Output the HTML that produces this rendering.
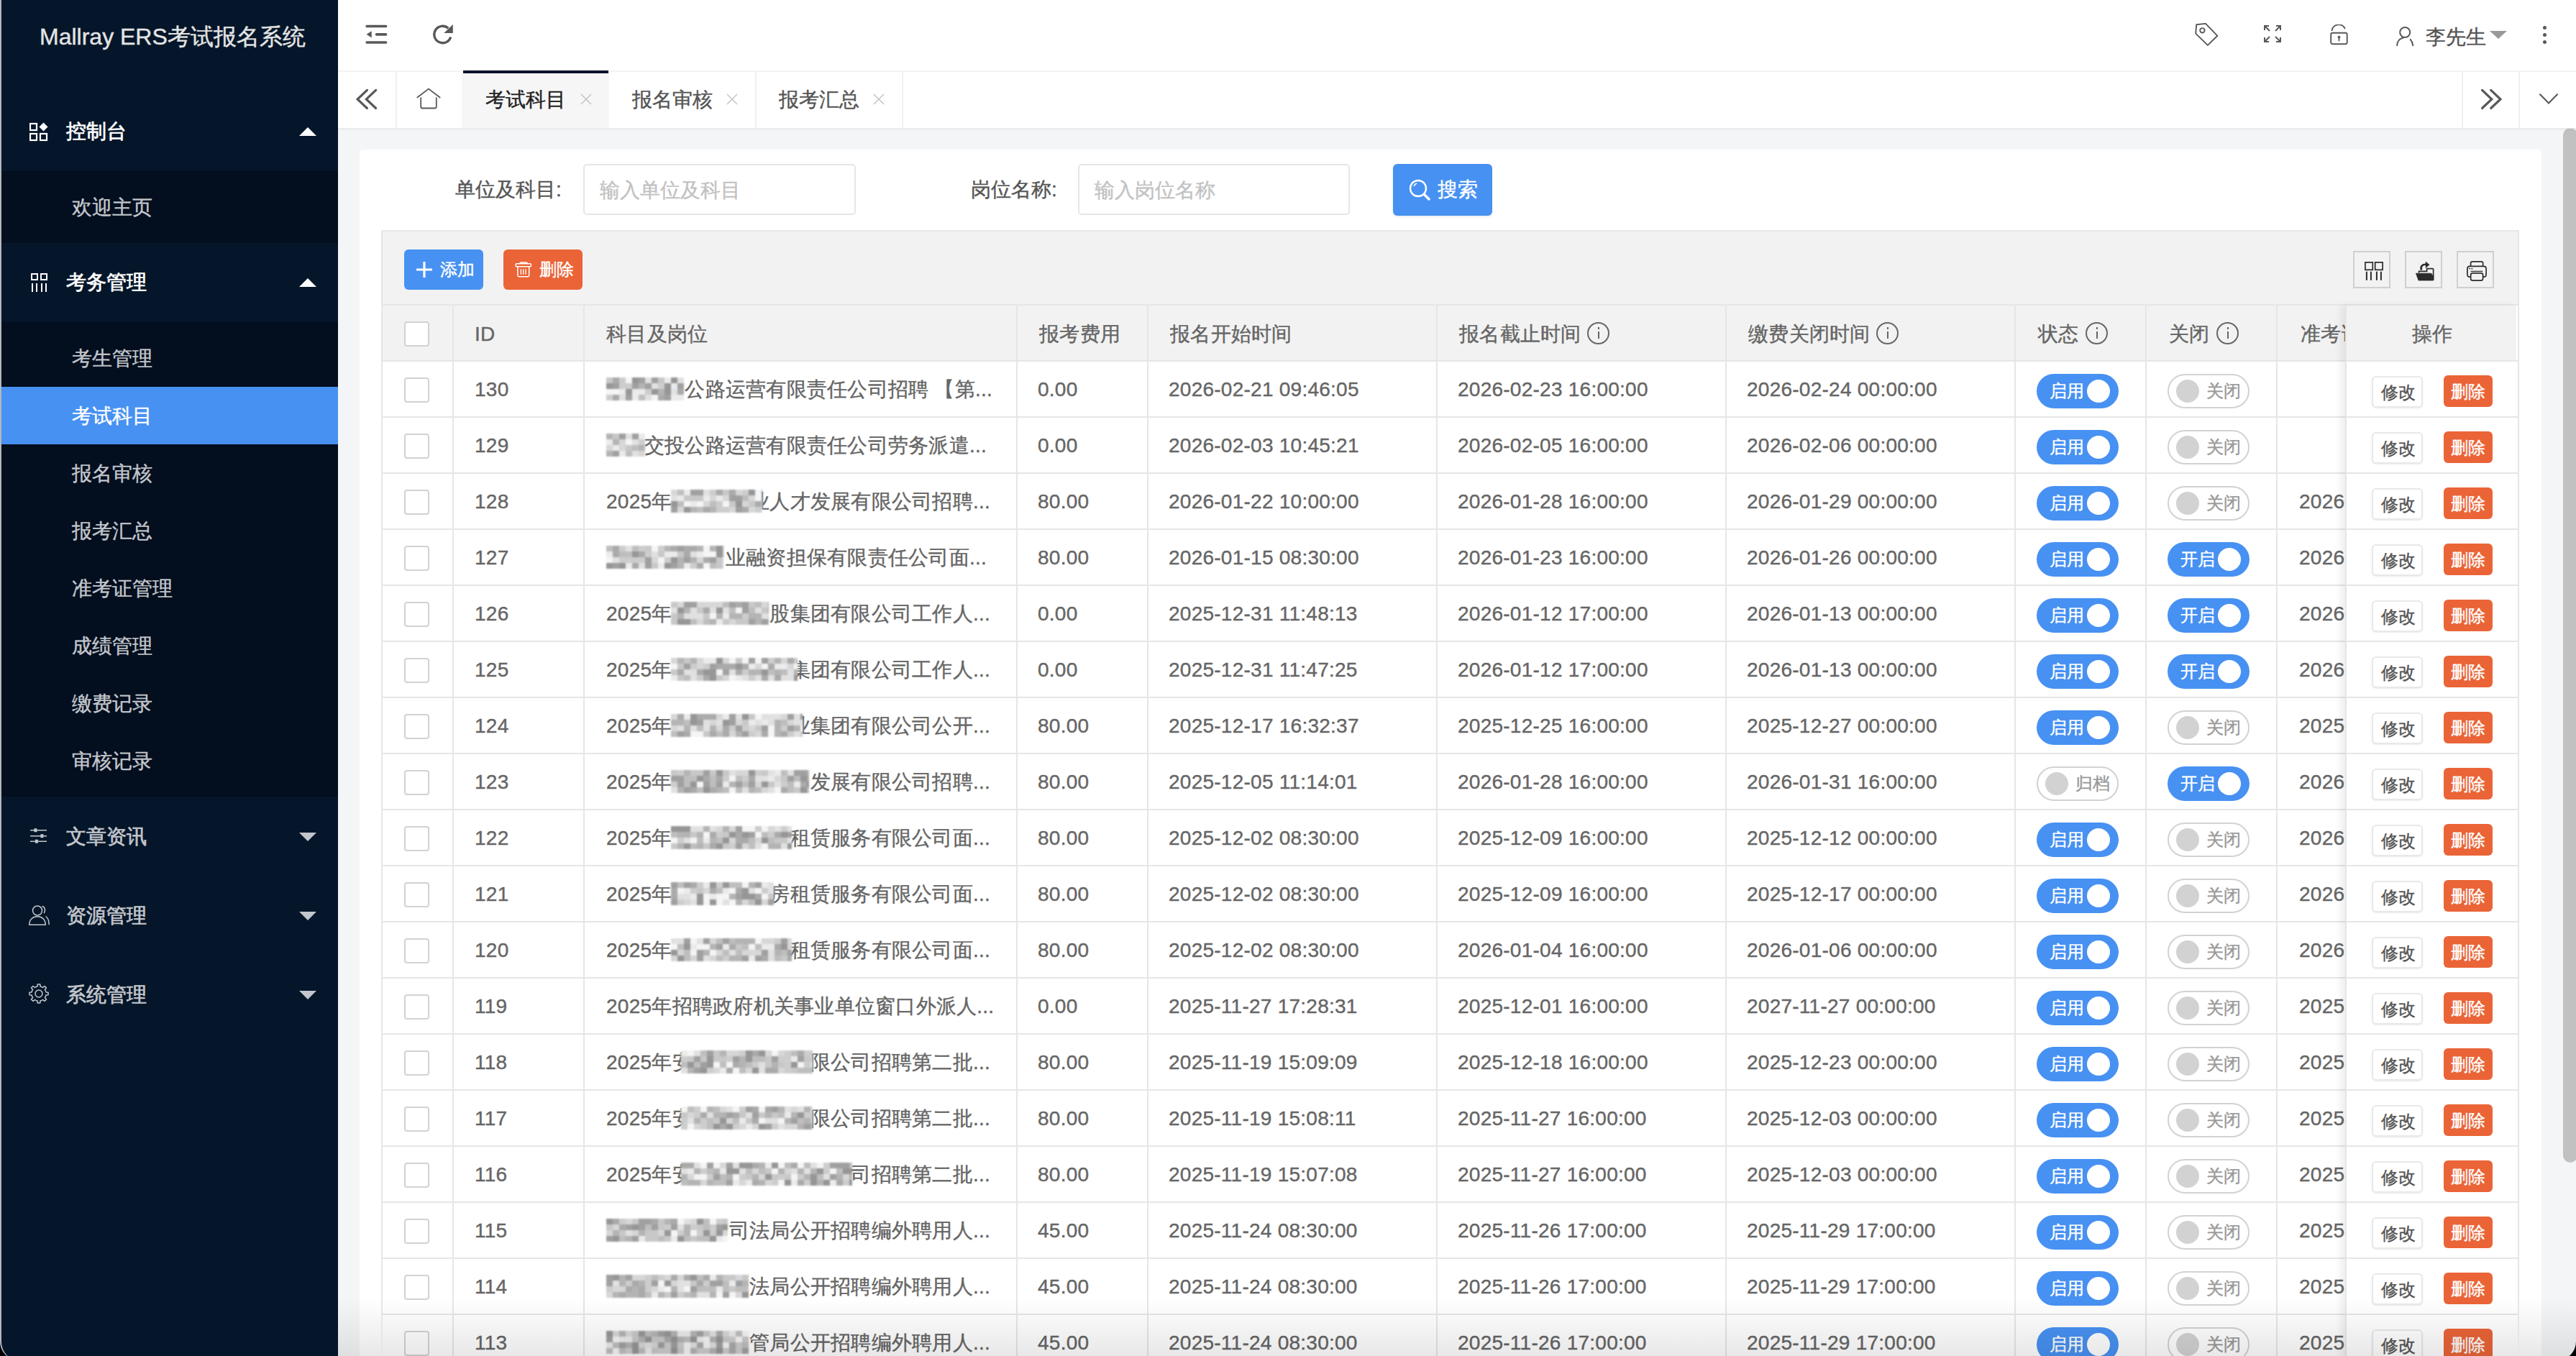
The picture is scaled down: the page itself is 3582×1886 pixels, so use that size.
<!DOCTYPE html><html><head><meta charset="utf-8"><style>
*{box-sizing:border-box;margin:0;padding:0}
html,body{width:3582px;height:1886px;overflow:hidden;background:#f4f5f7;font-family:"Liberation Sans",sans-serif;}
.a{position:absolute}
.t,.cell,.lbl,.tx,.st,.ph{-webkit-text-stroke:0.4px currentColor}
.mtop .tx{-webkit-text-stroke:0.7px currentColor}
.t{position:absolute;white-space:nowrap;line-height:1}
#side{left:0;top:0;width:470px;height:1886px;background:#05162a;}
.mtop{position:absolute;left:0;width:470px;height:110px;}
.mtop .tx{position:absolute;left:92px;top:41px;font-size:28px;color:#fff;line-height:28px;white-space:nowrap;font-weight:500}
.sub{position:absolute;left:0;width:470px;background:#030e1e}
.si{position:absolute;left:0;width:470px;height:80px}
.si .tx{position:absolute;left:100px;top:27px;font-size:28px;line-height:28px;color:#c2c6cc;white-space:nowrap}
.tri{position:absolute;width:0;height:0;border-left:12px solid transparent;border-right:12px solid transparent}
.tri.up{border-bottom:12px solid #fff}
.tri.dn{border-top:12px solid #fff}
#hdr{left:470px;top:0;width:3112px;height:99px;background:#fff}
#tabs{left:470px;top:99px;width:3112px;height:79px;background:#fff;box-shadow:0 1px 0 #e9e9ea,0 2px 4px rgba(0,0,0,0.05);z-index:2}
#content{left:470px;top:178px;width:3112px;height:1708px;background:#f4f5f7;overflow:hidden}
#card{left:30px;top:30px;width:3034px;height:1800px;background:#fff;border-radius:5px}
.inp{position:absolute;height:71px;border:2px solid #e6e6e6;border-radius:5px;background:#fff}
.inp .ph{position:absolute;left:21px;top:21px;font-size:28px;line-height:28px;color:#c2c2c2;white-space:nowrap}
.lbl{position:absolute;font-size:28px;line-height:28px;color:#555;white-space:nowrap}
#tbl{left:30px;top:112px;width:2973px;height:1700px;background:#fff}
.cell{position:absolute;font-size:28px;line-height:28px;color:#666666;white-space:nowrap;letter-spacing:0.25px}
.vl{position:absolute;top:104px;width:2px;background:#e6e6e6}
.hl{position:absolute;left:0;height:2px;background:#e6e6e6}
.cb{position:absolute;width:35px;height:35px;border:2px solid #d2d2d2;border-radius:4px;background:#fff}
.sw{position:absolute;width:114px;height:48px;border-radius:24px}
.sw.on{background:#4791f2}
.sw.off{background:#fff;border:2px solid #d2d2d2}
.sw .k{position:absolute;width:32px;height:32px;border-radius:50%;top:8px}
.sw.on .k{background:#fff;left:70px}
.sw.off .k{background:#d2d2d2;left:10px;top:6px}
.sw .st{position:absolute;font-size:24px;line-height:24px;top:12px;white-space:nowrap}
.sw.on .st{color:#fff;left:18px}
.sw.off .st{color:#999;left:52px;top:10px}
.btnm{position:absolute;width:71px;height:44px;border:2px solid #e8e8e8;border-radius:6px;background:#fff;box-shadow:0 1px 2px rgba(0,0,0,0.08)}
.btnm .st{position:absolute;left:11px;top:9px;font-size:24px;line-height:24px;color:#555}
.btnd{position:absolute;width:68px;height:44px;border-radius:6px;background:#ea6437}
.btnd .st{position:absolute;left:10px;top:11px;font-size:24px;line-height:24px;color:#fff}
.info{position:absolute;width:31px;height:31px;border:2px solid #666;border-radius:50%}
.info:after{content:'';position:absolute;left:12.5px;top:11px;width:2px;height:10px;background:#666}
.info:before{content:'';position:absolute;left:12.5px;top:5px;width:2px;height:3px;background:#666}
.mosaic{position:absolute;height:27px;overflow:hidden}
</style></head><body>
<div id="side" class="a">
<div class="t" style="left:55px;top:35px;font-size:32px;color:#e4e4e4;">Mallray ERS考试报名系统</div>
<div class="mtop" style="top:128px"><svg class="a" style="left:41px;top:42px" width="27" height="27" viewBox="0 0 27 27" fill="none" stroke="#fff" stroke-width="2.2"><rect x="1" y="2" width="9" height="9"/><rect x="1" y="16" width="9" height="9"/><rect x="15" y="16" width="9" height="9"/><path d="M19.5 0.5 L25.5 6.5 L19.5 12.5 L13.5 6.5Z" fill="#fff" stroke="none"/></svg><div class="tx" style="color:#fff;top:41px">控制台</div><div class="tri up" style="left:416px;top:49px"></div></div>
<div class="sub" style="top:238px;height:100px"><div class="si" style="top:10px"><div class="tx">欢迎主页</div></div></div>
<div class="mtop" style="top:338px"><svg class="a" style="left:43px;top:42px" width="24" height="27" viewBox="0 0 24 27" fill="none" stroke="#fff" stroke-width="2"><rect x="1" y="1" width="8" height="8"/><rect x="14" y="1" width="8" height="8"/><path d="M2 14v12M8 14v12M15 14v12M21 14v12"/></svg><div class="tx" style="color:#fff;top:41px">考务管理</div><div class="tri up" style="left:416px;top:49px"></div></div>
<div class="sub" style="top:448px;height:660px"><div class="si" style="top:10px"><div class="tx">考生管理</div></div><div class="si" style="top:90px;background:#4791f2"><div class="tx" style="color:#fff">考试科目</div></div><div class="si" style="top:170px"><div class="tx">报名审核</div></div><div class="si" style="top:250px"><div class="tx">报考汇总</div></div><div class="si" style="top:330px"><div class="tx">准考证管理</div></div><div class="si" style="top:410px"><div class="tx">成绩管理</div></div><div class="si" style="top:490px"><div class="tx">缴费记录</div></div><div class="si" style="top:570px"><div class="tx">审核记录</div></div></div>
<div class="mtop" style="top:1108px"><svg class="a" style="left:42px;top:44px" width="24" height="22" viewBox="0 0 24 22" fill="#c3c6cc" stroke="#c3c6cc" stroke-width="1.6"><path d="M0 2.7H23M0 10.7H23M0 18.2H23" fill="none"/><rect x="5.4" y="0.2" width="4" height="5" stroke="none"/><rect x="14.4" y="8.2" width="4" height="5" stroke="none"/><rect x="6.9" y="15.7" width="4" height="5" stroke="none"/></svg><div class="tx" style="color:#c3c6cc;top:42px">文章资讯</div><div class="tri dn" style="left:416px;top:50px;border-top-color:#c3c6cc"></div></div>
<div class="mtop" style="top:1218px"><svg class="a" style="left:40px;top:41px" width="29" height="28" viewBox="0 0 29 28" fill="none" stroke="#c3c6cc" stroke-width="1.5"><circle cx="12" cy="7.5" r="6.5"/><path d="M0.8 27.2C0.8 20 5.5 15.8 12 15.8S23.2 20 23.2 27.2Z"/><path d="M18.5 1.6C22.5 2.5 23.8 7.5 21 11M23.5 15.5C26.5 17.5 28.2 21.5 28.2 27.2"/></svg><div class="tx" style="color:#c3c6cc;top:42px">资源管理</div><div class="tri dn" style="left:416px;top:50px;border-top-color:#c3c6cc"></div></div>
<div class="mtop" style="top:1328px"><svg class="a" style="left:40px;top:40px" width="28" height="28" viewBox="0 0 28 28" fill="none" stroke="#c3c6cc" stroke-width="1.5" stroke-linejoin="round"><path d="M23.42 10.10 L24.01 12.05 L27.07 12.16 L27.07 15.84 L24.01 15.95 L23.42 17.90 L22.46 19.70 L24.54 21.94 L21.94 24.54 L19.70 22.46 L17.90 23.42 L15.95 24.01 L15.84 27.07 L12.16 27.07 L12.05 24.01 L10.10 23.42 L8.30 22.46 L6.06 24.54 L3.46 21.94 L5.54 19.70 L4.58 17.90 L3.99 15.95 L0.93 15.84 L0.93 12.16 L3.99 12.05 L4.58 10.10 L5.54 8.30 L3.46 6.06 L6.06 3.46 L8.30 5.54 L10.10 4.58 L12.05 3.99 L12.16 0.93 L15.84 0.93 L15.95 3.99 L17.90 4.58 L19.70 5.54 L21.94 3.46 L24.54 6.06 L22.46 8.30 Z"/><circle cx="14" cy="14" r="5"/></svg><div class="tx" style="color:#c3c6cc;top:42px">系统管理</div><div class="tri dn" style="left:416px;top:50px;border-top-color:#c3c6cc"></div></div>
</div>
<div id="hdr" class="a">
<svg class="a" style="left:38px;top:34px" width="31" height="28" viewBox="0 0 31 28" fill="none" stroke="#595959" stroke-width="3.7" stroke-linecap="round"><path d="M2.15 2.5H28.55M15.55 13.8H28.55M2.15 25H28.55"/><path d="M1.6 13.8L8.7 9.3V18.6Z" fill="#595959" stroke="none"/></svg>
<svg class="a" style="left:132px;top:33px" width="30" height="30" viewBox="0 0 30 30" fill="none"><path d="M21.33 6.31A11.7 11.7 0 1 0 24.69 18.42" stroke="#595959" stroke-width="3.4"/><path d="M27.8 1V13.1H15.3Z" fill="#595959"/></svg>
<svg class="a" style="left:2582px;top:32px" width="34" height="34" viewBox="0 0 34 34" fill="none" stroke="#595959" stroke-width="1.9" stroke-linejoin="round"><path d="M2.2 2.2L15 0.9L31.4 17.8L17.9 30.9L1.2 14.6Z"/><circle cx="10.4" cy="10.3" r="3.2"/></svg>
<svg class="a" style="left:2678px;top:35px" width="24" height="24" viewBox="0 0 24 24" fill="none" stroke="#595959" stroke-width="2"><path d="M1 7V1h6M1 1l7 7M17 1h6v6M23 1l-7 7M1 17v6h6M1 23l7-7M23 17v6h-6M23 23l-7-7"/></svg>
<svg class="a" style="left:2770px;top:34px" width="26" height="29" viewBox="0 0 26 29" fill="none" stroke="#595959" stroke-width="1.9"><rect x="1.2" y="11.8" width="22.5" height="15.5" rx="2.2"/><path d="M2.4 9C4.2 -1.6 17 -2.4 20.9 6.2"/><circle cx="12.5" cy="17.6" r="1.9" fill="#595959" stroke="none"/><path d="M12.5 18V22.6" stroke-width="1.8" stroke-linecap="round"/></svg>
<svg class="a" style="left:2862px;top:37px" width="25" height="28" viewBox="0 0 25 28" fill="none" stroke="#595959" stroke-width="2" stroke-linecap="round"><circle cx="12.2" cy="8" r="7"/><path d="M1.2 26.2C1.5 20.5 4.5 16.8 9.8 15.6M19.7 17.8C21.6 20.2 23 23 23.2 26.2"/></svg>
<div class="t" style="left:2903px;top:38px;font-size:28px;color:#555">李先生</div>
<div class="tri" style="left:2992px;top:43px;border-top:11px solid #999;border-left:12px solid transparent;border-right:12px solid transparent"></div>
<div class="a" style="left:3066px;top:36px;width:5px;height:5px;border-radius:50%;background:#595959"></div>
<div class="a" style="left:3066px;top:46px;width:5px;height:5px;border-radius:50%;background:#595959"></div>
<div class="a" style="left:3066px;top:56px;width:5px;height:5px;border-radius:50%;background:#595959"></div>
</div>
<div id="tabs" class="a">
<div class="a" style="left:0;top:-1px;width:3112px;height:2px;background:#f2f2f2"></div>
<div class="a" style="left:80px;top:0;width:2px;height:79px;background:#f0f0f0"></div>
<svg class="a" style="left:20px;top:21px" width="40" height="40" viewBox="0 0 40 40" fill="none" stroke="#595959" stroke-width="3.2" stroke-linecap="round"><path d="M20.4 5.4L7.1 18L20.4 30.5M32.6 5.4L19.3 18L32.6 30.5"/></svg>
<svg class="a" style="left:105px;top:19px" width="42" height="36" viewBox="0 0 42 36" fill="none" stroke="#595959" stroke-width="1.8" stroke-linecap="round"><path d="M5.3 17.5L21 5.6L36.7 17.5"/><path d="M10.2 18.2V30.5Q10.2 32.5 12.2 32.5H29.8Q31.8 32.5 31.8 30.5V18.2"/></svg>
<div class="a" style="left:172px;top:0;width:205px;height:79px;background:#f6f6f6"></div>
<div class="a" style="left:174px;top:-1px;width:202px;height:4px;background:#06132a"></div>
<div class="t" style="left:205px;top:26px;font-size:28px;color:#222">考试科目</div>
<svg class="a" style="left:337px;top:31px" width="16" height="16" viewBox="0 0 16 16" stroke="#c4c4c4" stroke-width="1.5"><path d="M1 1L15 15M15 1L1 15"/></svg>
<div class="a" style="left:580px;top:0;width:2px;height:79px;background:#f0f0f0"></div>
<div class="t" style="left:409px;top:26px;font-size:28px;color:#555">报名审核</div>
<svg class="a" style="left:540px;top:31px" width="16" height="16" viewBox="0 0 16 16" stroke="#c4c4c4" stroke-width="1.5"><path d="M1 1L15 15M15 1L1 15"/></svg>
<div class="a" style="left:784px;top:0;width:2px;height:79px;background:#f0f0f0"></div>
<div class="t" style="left:613px;top:26px;font-size:28px;color:#555">报考汇总</div>
<svg class="a" style="left:744px;top:31px" width="16" height="16" viewBox="0 0 16 16" stroke="#c4c4c4" stroke-width="1.5"><path d="M1 1L15 15M15 1L1 15"/></svg>
<div class="a" style="left:2953px;top:0;width:2px;height:79px;background:#f0f0f0"></div>
<div class="a" style="left:3032px;top:0;width:2px;height:79px;background:#f0f0f0"></div>
<svg class="a" style="left:2970px;top:21px" width="40" height="40" viewBox="0 0 40 40" fill="none" stroke="#595959" stroke-width="3.2" stroke-linecap="round"><path d="M11.5 5.4L24.8 18L11.5 30.5M23.7 5.4L37 18L23.7 30.5"/></svg>
<svg class="a" style="left:3055px;top:26px" width="40" height="26" viewBox="0 0 40 26" fill="none" stroke="#595959" stroke-width="2.1" stroke-linecap="round"><path d="M7 6.2L19 18.5L31 6.2"/></svg>
</div>
<div id="content" class="a">
<div id="card" class="a">
<div class="lbl" style="left:133px;top:42px">单位及科目:</div>
<div class="inp" style="left:311px;top:20px;width:379px"><div class="ph">输入单位及科目</div></div>
<div class="lbl" style="left:850px;top:42px">岗位名称:</div>
<div class="inp" style="left:999px;top:20px;width:378px"><div class="ph">输入岗位名称</div></div>
<div class="a" style="left:1437px;top:20px;width:138px;height:72px;background:#4791f2;border-radius:6px;box-shadow:0 2px 3px rgba(0,0,0,0.08)"><svg class="a" style="left:22px;top:21px" width="32" height="32" viewBox="0 0 32 32" fill="none" stroke="#fff" stroke-width="2.4"><circle cx="13" cy="13" r="11"/><path d="M21 21 L29 29" stroke-width="3.5"/><path d="M7 10 a7 7 0 0 1 4 -4" stroke-width="1.6"/></svg><div class="t" style="left:62px;top:22px;font-size:28px;color:#fff">搜索</div></div>
<div id="tbl" class="a">
<div class="a" style="left:0;top:0;width:2973px;height:104px;background:#f2f2f2"></div>
<div class="a" style="left:0;top:0;width:2973px;height:2px;background:#e6e6e6"></div>
<div class="a" style="left:0;top:0;width:2px;height:1700px;background:#e6e6e6;z-index:3"></div>
<div class="a" style="left:2971px;top:0;width:2px;height:1700px;background:#e6e6e6;z-index:3"></div>
<div class="a" style="left:32px;top:27px;width:110px;height:56px;background:#4791f2;border-radius:6px"><svg class="a" style="left:17px;top:17px" width="22" height="22" viewBox="0 0 22 22" stroke="#fff" stroke-width="3.2"><path d="M11 0V22M0 11H22"/></svg><div class="t" style="left:50px;top:16px;font-size:24px;color:#fff">添加</div></div>
<div class="a" style="left:170px;top:27px;width:110px;height:56px;background:#ea6437;border-radius:6px"><svg class="a" style="left:16px;top:16px" width="24" height="24" viewBox="0 0 24 24" fill="none" stroke="#fff" stroke-width="1.5"><rect x="1" y="3.7" width="21.5" height="4" rx="1.5"/><path d="M6.8 3.7Q6.8 2 8.5 2H15.6Q17.3 2 17.3 3.7"/><path d="M3.9 7.8V20Q3.9 21.7 5.6 21.7H18Q19.7 21.7 19.7 20V7.8"/><path d="M8.4 11.3V18.8M11.7 11.3V18.8M15 11.3V18.8" stroke-width="1.4"/></svg><div class="t" style="left:50px;top:16px;font-size:24px;color:#fff">删除</div></div>
<div class="a" style="left:2742px;top:29px;width:52px;height:52px;border:2px solid #cfcfcf"></div>
<div class="a" style="left:2814px;top:29px;width:52px;height:52px;border:2px solid #cfcfcf"></div>
<div class="a" style="left:2886px;top:29px;width:52px;height:52px;border:2px solid #cfcfcf"></div>
<svg class="a" style="left:2758px;top:44px" width="26" height="26" viewBox="0 0 26 26" fill="none" stroke="#2b2b2b" stroke-width="1.7"><rect x="0.9" y="0.9" width="10.4" height="10.4"/><rect x="14.7" y="0.9" width="10.4" height="10.4"/><path d="M2.9 14.5V25M8.9 14.5V25M16.9 14.5V25M22.9 14.5V25" stroke-width="2" stroke-linecap="round"/></svg>
<svg class="a" style="left:2829px;top:43px" width="26" height="28" viewBox="0 0 26 28"><path d="M4.6 16.5V14.3H15.6V10.6H23.6Q24.6 10.6 24.6 11.6V26" fill="none" stroke="#2b2b2b" stroke-width="1.7"/><path d="M0.5 17.2H21.6L24.8 21.6V27H4Z" fill="#2b2b2b" stroke="#2b2b2b" stroke-width="0.8" stroke-linejoin="round"/><path d="M8 12.6C6.3 7.6 9.6 4.4 14.8 4.8" fill="none" stroke="#2b2b2b" stroke-width="2.6"/><path d="M13.8 0.4L19.4 5.2L13.8 10Z" fill="#2b2b2b"/></svg>
<svg class="a" style="left:2900px;top:43px" width="28" height="28" viewBox="0 0 28 28" fill="none" stroke="#2b2b2b" stroke-width="1.7"><path d="M5.6 7.4V3Q5.6 0.9 7.7 0.9H20.5Q22.6 0.9 22.6 3V7.4"/><path d="M5.6 22.2H4.3Q0.9 22.2 0.9 18.8V10.8Q0.9 7.4 4.3 7.4H23.7Q27.1 7.4 27.1 10.8V18.8Q27.1 22.2 23.7 22.2H22.6"/><rect x="5.6" y="16.8" width="17" height="10.3" rx="2.6"/><path d="M3.2 10.6H5.2M6.4 10.6H8.4M5.6 14.4H22.2" stroke-width="1.1"/></svg>
<div class="hl" style="top:103px;width:2973px"></div>
<div class="a" style="left:0;top:105px;width:2973px;height:76px;background:#f2f2f2"></div>
<div class="hl" style="top:181px;width:2973px"></div>
<div class="hl" style="top:259px;width:2973px"></div>
<div class="hl" style="top:337px;width:2973px"></div>
<div class="hl" style="top:415px;width:2973px"></div>
<div class="hl" style="top:493px;width:2973px"></div>
<div class="hl" style="top:571px;width:2973px"></div>
<div class="hl" style="top:649px;width:2973px"></div>
<div class="hl" style="top:727px;width:2973px"></div>
<div class="hl" style="top:805px;width:2973px"></div>
<div class="hl" style="top:883px;width:2973px"></div>
<div class="hl" style="top:961px;width:2973px"></div>
<div class="hl" style="top:1039px;width:2973px"></div>
<div class="hl" style="top:1117px;width:2973px"></div>
<div class="hl" style="top:1195px;width:2973px"></div>
<div class="hl" style="top:1273px;width:2973px"></div>
<div class="hl" style="top:1351px;width:2973px"></div>
<div class="hl" style="top:1429px;width:2973px"></div>
<div class="hl" style="top:1507px;width:2973px"></div>
<div class="hl" style="top:1585px;width:2973px"></div>
<div class="vl" style="left:99px;height:1700px"></div>
<div class="vl" style="left:281px;height:1700px"></div>
<div class="vl" style="left:883px;height:1700px"></div>
<div class="vl" style="left:1065px;height:1700px"></div>
<div class="vl" style="left:1467px;height:1700px"></div>
<div class="vl" style="left:1869px;height:1700px"></div>
<div class="vl" style="left:2271px;height:1700px"></div>
<div class="vl" style="left:2453px;height:1700px"></div>
<div class="vl" style="left:2635px;height:1700px"></div>
<div class="cb" style="left:32px;top:127px"></div>
<div class="cell" style="left:130px;top:131px">ID</div>
<div class="cell" style="left:313px;top:131px">科目及岗位</div>
<div class="cell" style="left:915px;top:131px">报考费用</div>
<div class="cell" style="left:1097px;top:131px">报名开始时间</div>
<div class="cell" style="left:1499px;top:131px">报名截止时间</div>
<div class="info" style="left:1677px;top:128px"></div>
<div class="cell" style="left:1901px;top:131px">缴费关闭时间</div>
<div class="info" style="left:2079px;top:128px"></div>
<div class="cell" style="left:2304px;top:131px">状态</div>
<div class="info" style="left:2370px;top:128px"></div>
<div class="cell" style="left:2486px;top:131px">关闭</div>
<div class="info" style="left:2552px;top:128px"></div>
<div class="cell" style="left:2669px;top:131px">准考证号</div>
<div class="cb" style="left:32px;top:205px"></div>
<div class="cell" style="left:130px;top:208px">130</div>
<div class="cell" style="right:2123px;top:208px">公路运营有限责任公司招聘 【第...</div>
<svg class="a" style="left:313px;top:205px;filter:blur(0.8px)" width="108" height="32" viewBox="0 0 108 32" preserveAspectRatio="none"><rect x="0" y="0" width="9" height="8" fill="rgb(200,200,200)"/><rect x="9" y="0" width="9" height="8" fill="rgb(170,170,170)"/><rect x="18" y="0" width="9" height="8" fill="rgb(205,205,205)"/><rect x="27" y="0" width="9" height="8" fill="rgb(245,245,245)"/><rect x="36" y="0" width="9" height="8" fill="rgb(150,150,150)"/><rect x="45" y="0" width="9" height="8" fill="rgb(160,160,160)"/><rect x="54" y="0" width="9" height="8" fill="rgb(225,225,225)"/><rect x="63" y="0" width="9" height="8" fill="rgb(160,160,160)"/><rect x="72" y="0" width="9" height="8" fill="rgb(200,200,200)"/><rect x="81" y="0" width="9" height="8" fill="rgb(235,235,235)"/><rect x="90" y="0" width="9" height="8" fill="rgb(150,150,150)"/><rect x="99" y="0" width="9" height="8" fill="rgb(225,225,225)"/><rect x="108" y="0" width="9" height="8" fill="rgb(180,180,180)"/><rect x="0" y="8" width="9" height="8" fill="rgb(150,150,150)"/><rect x="9" y="8" width="9" height="8" fill="rgb(160,160,160)"/><rect x="18" y="8" width="9" height="8" fill="rgb(205,205,205)"/><rect x="27" y="8" width="9" height="8" fill="rgb(205,205,205)"/><rect x="36" y="8" width="9" height="8" fill="rgb(160,160,160)"/><rect x="45" y="8" width="9" height="8" fill="rgb(180,180,180)"/><rect x="54" y="8" width="9" height="8" fill="rgb(160,160,160)"/><rect x="63" y="8" width="9" height="8" fill="rgb(225,225,225)"/><rect x="72" y="8" width="9" height="8" fill="rgb(205,205,205)"/><rect x="81" y="8" width="9" height="8" fill="rgb(150,150,150)"/><rect x="90" y="8" width="9" height="8" fill="rgb(235,235,235)"/><rect x="99" y="8" width="9" height="8" fill="rgb(160,160,160)"/><rect x="108" y="8" width="9" height="8" fill="rgb(180,180,180)"/><rect x="0" y="16" width="9" height="8" fill="rgb(245,245,245)"/><rect x="9" y="16" width="9" height="8" fill="rgb(245,245,245)"/><rect x="18" y="16" width="9" height="8" fill="rgb(235,235,235)"/><rect x="27" y="16" width="9" height="8" fill="rgb(150,150,150)"/><rect x="36" y="16" width="9" height="8" fill="rgb(235,235,235)"/><rect x="45" y="16" width="9" height="8" fill="rgb(235,235,235)"/><rect x="54" y="16" width="9" height="8" fill="rgb(205,205,205)"/><rect x="63" y="16" width="9" height="8" fill="rgb(150,150,150)"/><rect x="72" y="16" width="9" height="8" fill="rgb(180,180,180)"/><rect x="81" y="16" width="9" height="8" fill="rgb(150,150,150)"/><rect x="90" y="16" width="9" height="8" fill="rgb(225,225,225)"/><rect x="99" y="16" width="9" height="8" fill="rgb(170,170,170)"/><rect x="108" y="16" width="9" height="8" fill="rgb(190,190,190)"/><rect x="0" y="24" width="9" height="8" fill="rgb(205,205,205)"/><rect x="9" y="24" width="9" height="8" fill="rgb(170,170,170)"/><rect x="18" y="24" width="9" height="8" fill="rgb(225,225,225)"/><rect x="27" y="24" width="9" height="8" fill="rgb(160,160,160)"/><rect x="36" y="24" width="9" height="8" fill="rgb(235,235,235)"/><rect x="45" y="24" width="9" height="8" fill="rgb(190,190,190)"/><rect x="54" y="24" width="9" height="8" fill="rgb(225,225,225)"/><rect x="63" y="24" width="9" height="8" fill="rgb(245,245,245)"/><rect x="72" y="24" width="9" height="8" fill="rgb(170,170,170)"/><rect x="81" y="24" width="9" height="8" fill="rgb(160,160,160)"/><rect x="90" y="24" width="9" height="8" fill="rgb(235,235,235)"/><rect x="99" y="24" width="9" height="8" fill="rgb(235,235,235)"/><rect x="108" y="24" width="9" height="8" fill="rgb(245,245,245)"/></svg>
<div class="cell" style="left:913px;top:208px">0.00</div>
<div class="cell" style="left:1095px;top:208px">2026-02-21 09:46:05</div>
<div class="cell" style="left:1497px;top:208px">2026-02-23 16:00:00</div>
<div class="cell" style="left:1899px;top:208px">2026-02-24 00:00:00</div>
<div class="sw on" style="left:2302px;top:200px"><div class="st">启用</div><div class="k"></div></div>
<div class="sw off" style="left:2484px;top:200px"><div class="k"></div><div class="st">关闭</div></div>
<div class="cb" style="left:32px;top:283px"></div>
<div class="cell" style="left:130px;top:286px">129</div>
<div class="cell" style="right:2131px;top:286px">交投公路运营有限责任公司劳务派遣...</div>
<svg class="a" style="left:313px;top:283px;filter:blur(0.8px)" width="54" height="32" viewBox="0 0 54 32" preserveAspectRatio="none"><rect x="0" y="0" width="9" height="8" fill="rgb(180,180,180)"/><rect x="9" y="0" width="9" height="8" fill="rgb(200,200,200)"/><rect x="18" y="0" width="9" height="8" fill="rgb(160,160,160)"/><rect x="27" y="0" width="9" height="8" fill="rgb(225,225,225)"/><rect x="36" y="0" width="9" height="8" fill="rgb(160,160,160)"/><rect x="45" y="0" width="9" height="8" fill="rgb(235,235,235)"/><rect x="54" y="0" width="9" height="8" fill="rgb(150,150,150)"/><rect x="0" y="8" width="9" height="8" fill="rgb(235,235,235)"/><rect x="9" y="8" width="9" height="8" fill="rgb(180,180,180)"/><rect x="18" y="8" width="9" height="8" fill="rgb(215,215,215)"/><rect x="27" y="8" width="9" height="8" fill="rgb(245,245,245)"/><rect x="36" y="8" width="9" height="8" fill="rgb(225,225,225)"/><rect x="45" y="8" width="9" height="8" fill="rgb(205,205,205)"/><rect x="54" y="8" width="9" height="8" fill="rgb(200,200,200)"/><rect x="0" y="16" width="9" height="8" fill="rgb(215,215,215)"/><rect x="9" y="16" width="9" height="8" fill="rgb(235,235,235)"/><rect x="18" y="16" width="9" height="8" fill="rgb(215,215,215)"/><rect x="27" y="16" width="9" height="8" fill="rgb(200,200,200)"/><rect x="36" y="16" width="9" height="8" fill="rgb(190,190,190)"/><rect x="45" y="16" width="9" height="8" fill="rgb(180,180,180)"/><rect x="54" y="16" width="9" height="8" fill="rgb(170,170,170)"/><rect x="0" y="24" width="9" height="8" fill="rgb(180,180,180)"/><rect x="9" y="24" width="9" height="8" fill="rgb(160,160,160)"/><rect x="18" y="24" width="9" height="8" fill="rgb(235,235,235)"/><rect x="27" y="24" width="9" height="8" fill="rgb(190,190,190)"/><rect x="36" y="24" width="9" height="8" fill="rgb(225,225,225)"/><rect x="45" y="24" width="9" height="8" fill="rgb(215,215,215)"/><rect x="54" y="24" width="9" height="8" fill="rgb(200,200,200)"/></svg>
<div class="cell" style="left:913px;top:286px">0.00</div>
<div class="cell" style="left:1095px;top:286px">2026-02-03 10:45:21</div>
<div class="cell" style="left:1497px;top:286px">2026-02-05 16:00:00</div>
<div class="cell" style="left:1899px;top:286px">2026-02-06 00:00:00</div>
<div class="sw on" style="left:2302px;top:278px"><div class="st">启用</div><div class="k"></div></div>
<div class="sw off" style="left:2484px;top:278px"><div class="k"></div><div class="st">关闭</div></div>
<div class="cb" style="left:32px;top:361px"></div>
<div class="cell" style="left:130px;top:364px">128</div>
<div class="cell" style="right:2126px;top:364px">业人才发展有限公司招聘...</div>
<div class="cell" style="left:313px;top:364px">2025年</div>
<svg class="a" style="left:403px;top:361px;filter:blur(0.8px)" width="127" height="32" viewBox="0 0 127 32" preserveAspectRatio="none"><rect x="0" y="0" width="9" height="8" fill="rgb(215,215,215)"/><rect x="9" y="0" width="9" height="8" fill="rgb(190,190,190)"/><rect x="18" y="0" width="9" height="8" fill="rgb(235,235,235)"/><rect x="27" y="0" width="9" height="8" fill="rgb(160,160,160)"/><rect x="36" y="0" width="9" height="8" fill="rgb(160,160,160)"/><rect x="45" y="0" width="9" height="8" fill="rgb(225,225,225)"/><rect x="54" y="0" width="9" height="8" fill="rgb(205,205,205)"/><rect x="63" y="0" width="9" height="8" fill="rgb(170,170,170)"/><rect x="72" y="0" width="9" height="8" fill="rgb(200,200,200)"/><rect x="81" y="0" width="9" height="8" fill="rgb(170,170,170)"/><rect x="90" y="0" width="9" height="8" fill="rgb(215,215,215)"/><rect x="99" y="0" width="9" height="8" fill="rgb(205,205,205)"/><rect x="108" y="0" width="9" height="8" fill="rgb(150,150,150)"/><rect x="117" y="0" width="9" height="8" fill="rgb(245,245,245)"/><rect x="126" y="0" width="9" height="8" fill="rgb(160,160,160)"/><rect x="0" y="8" width="9" height="8" fill="rgb(225,225,225)"/><rect x="9" y="8" width="9" height="8" fill="rgb(235,235,235)"/><rect x="18" y="8" width="9" height="8" fill="rgb(200,200,200)"/><rect x="27" y="8" width="9" height="8" fill="rgb(200,200,200)"/><rect x="36" y="8" width="9" height="8" fill="rgb(200,200,200)"/><rect x="45" y="8" width="9" height="8" fill="rgb(235,235,235)"/><rect x="54" y="8" width="9" height="8" fill="rgb(215,215,215)"/><rect x="63" y="8" width="9" height="8" fill="rgb(235,235,235)"/><rect x="72" y="8" width="9" height="8" fill="rgb(215,215,215)"/><rect x="81" y="8" width="9" height="8" fill="rgb(160,160,160)"/><rect x="90" y="8" width="9" height="8" fill="rgb(160,160,160)"/><rect x="99" y="8" width="9" height="8" fill="rgb(190,190,190)"/><rect x="108" y="8" width="9" height="8" fill="rgb(215,215,215)"/><rect x="117" y="8" width="9" height="8" fill="rgb(245,245,245)"/><rect x="126" y="8" width="9" height="8" fill="rgb(160,160,160)"/><rect x="0" y="16" width="9" height="8" fill="rgb(150,150,150)"/><rect x="9" y="16" width="9" height="8" fill="rgb(190,190,190)"/><rect x="18" y="16" width="9" height="8" fill="rgb(245,245,245)"/><rect x="27" y="16" width="9" height="8" fill="rgb(235,235,235)"/><rect x="36" y="16" width="9" height="8" fill="rgb(245,245,245)"/><rect x="45" y="16" width="9" height="8" fill="rgb(215,215,215)"/><rect x="54" y="16" width="9" height="8" fill="rgb(190,190,190)"/><rect x="63" y="16" width="9" height="8" fill="rgb(205,205,205)"/><rect x="72" y="16" width="9" height="8" fill="rgb(245,245,245)"/><rect x="81" y="16" width="9" height="8" fill="rgb(200,200,200)"/><rect x="90" y="16" width="9" height="8" fill="rgb(150,150,150)"/><rect x="99" y="16" width="9" height="8" fill="rgb(215,215,215)"/><rect x="108" y="16" width="9" height="8" fill="rgb(200,200,200)"/><rect x="117" y="16" width="9" height="8" fill="rgb(170,170,170)"/><rect x="126" y="16" width="9" height="8" fill="rgb(235,235,235)"/><rect x="0" y="24" width="9" height="8" fill="rgb(160,160,160)"/><rect x="9" y="24" width="9" height="8" fill="rgb(215,215,215)"/><rect x="18" y="24" width="9" height="8" fill="rgb(150,150,150)"/><rect x="27" y="24" width="9" height="8" fill="rgb(180,180,180)"/><rect x="36" y="24" width="9" height="8" fill="rgb(190,190,190)"/><rect x="45" y="24" width="9" height="8" fill="rgb(170,170,170)"/><rect x="54" y="24" width="9" height="8" fill="rgb(180,180,180)"/><rect x="63" y="24" width="9" height="8" fill="rgb(205,205,205)"/><rect x="72" y="24" width="9" height="8" fill="rgb(205,205,205)"/><rect x="81" y="24" width="9" height="8" fill="rgb(215,215,215)"/><rect x="90" y="24" width="9" height="8" fill="rgb(160,160,160)"/><rect x="99" y="24" width="9" height="8" fill="rgb(170,170,170)"/><rect x="108" y="24" width="9" height="8" fill="rgb(215,215,215)"/><rect x="117" y="24" width="9" height="8" fill="rgb(205,205,205)"/><rect x="126" y="24" width="9" height="8" fill="rgb(225,225,225)"/></svg>
<div class="cell" style="left:913px;top:364px">80.00</div>
<div class="cell" style="left:1095px;top:364px">2026-01-22 10:00:00</div>
<div class="cell" style="left:1497px;top:364px">2026-01-28 16:00:00</div>
<div class="cell" style="left:1899px;top:364px">2026-01-29 00:00:00</div>
<div class="sw on" style="left:2302px;top:356px"><div class="st">启用</div><div class="k"></div></div>
<div class="sw off" style="left:2484px;top:356px"><div class="k"></div><div class="st">关闭</div></div>
<div class="cell" style="left:2667px;top:364px">2026-01-01</div>
<div class="cb" style="left:32px;top:439px"></div>
<div class="cell" style="left:130px;top:442px">127</div>
<div class="cell" style="right:2131px;top:442px">业融资担保有限责任公司面...</div>
<svg class="a" style="left:313px;top:439px;filter:blur(0.8px)" width="164" height="32" viewBox="0 0 164 32" preserveAspectRatio="none"><rect x="0" y="0" width="9" height="8" fill="rgb(190,190,190)"/><rect x="9" y="0" width="9" height="8" fill="rgb(170,170,170)"/><rect x="18" y="0" width="9" height="8" fill="rgb(205,205,205)"/><rect x="27" y="0" width="9" height="8" fill="rgb(225,225,225)"/><rect x="36" y="0" width="9" height="8" fill="rgb(190,190,190)"/><rect x="45" y="0" width="9" height="8" fill="rgb(205,205,205)"/><rect x="54" y="0" width="9" height="8" fill="rgb(200,200,200)"/><rect x="63" y="0" width="9" height="8" fill="rgb(245,245,245)"/><rect x="72" y="0" width="9" height="8" fill="rgb(205,205,205)"/><rect x="81" y="0" width="9" height="8" fill="rgb(180,180,180)"/><rect x="90" y="0" width="9" height="8" fill="rgb(170,170,170)"/><rect x="99" y="0" width="9" height="8" fill="rgb(160,160,160)"/><rect x="108" y="0" width="9" height="8" fill="rgb(170,170,170)"/><rect x="117" y="0" width="9" height="8" fill="rgb(170,170,170)"/><rect x="126" y="0" width="9" height="8" fill="rgb(180,180,180)"/><rect x="135" y="0" width="9" height="8" fill="rgb(245,245,245)"/><rect x="144" y="0" width="9" height="8" fill="rgb(180,180,180)"/><rect x="153" y="0" width="9" height="8" fill="rgb(150,150,150)"/><rect x="162" y="0" width="9" height="8" fill="rgb(215,215,215)"/><rect x="0" y="8" width="9" height="8" fill="rgb(235,235,235)"/><rect x="9" y="8" width="9" height="8" fill="rgb(170,170,170)"/><rect x="18" y="8" width="9" height="8" fill="rgb(190,190,190)"/><rect x="27" y="8" width="9" height="8" fill="rgb(190,190,190)"/><rect x="36" y="8" width="9" height="8" fill="rgb(150,150,150)"/><rect x="45" y="8" width="9" height="8" fill="rgb(170,170,170)"/><rect x="54" y="8" width="9" height="8" fill="rgb(205,205,205)"/><rect x="63" y="8" width="9" height="8" fill="rgb(225,225,225)"/><rect x="72" y="8" width="9" height="8" fill="rgb(200,200,200)"/><rect x="81" y="8" width="9" height="8" fill="rgb(235,235,235)"/><rect x="90" y="8" width="9" height="8" fill="rgb(235,235,235)"/><rect x="99" y="8" width="9" height="8" fill="rgb(200,200,200)"/><rect x="108" y="8" width="9" height="8" fill="rgb(170,170,170)"/><rect x="117" y="8" width="9" height="8" fill="rgb(225,225,225)"/><rect x="126" y="8" width="9" height="8" fill="rgb(235,235,235)"/><rect x="135" y="8" width="9" height="8" fill="rgb(245,245,245)"/><rect x="144" y="8" width="9" height="8" fill="rgb(245,245,245)"/><rect x="153" y="8" width="9" height="8" fill="rgb(150,150,150)"/><rect x="162" y="8" width="9" height="8" fill="rgb(215,215,215)"/><rect x="0" y="16" width="9" height="8" fill="rgb(245,245,245)"/><rect x="9" y="16" width="9" height="8" fill="rgb(225,225,225)"/><rect x="18" y="16" width="9" height="8" fill="rgb(205,205,205)"/><rect x="27" y="16" width="9" height="8" fill="rgb(205,205,205)"/><rect x="36" y="16" width="9" height="8" fill="rgb(205,205,205)"/><rect x="45" y="16" width="9" height="8" fill="rgb(205,205,205)"/><rect x="54" y="16" width="9" height="8" fill="rgb(160,160,160)"/><rect x="63" y="16" width="9" height="8" fill="rgb(215,215,215)"/><rect x="72" y="16" width="9" height="8" fill="rgb(245,245,245)"/><rect x="81" y="16" width="9" height="8" fill="rgb(205,205,205)"/><rect x="90" y="16" width="9" height="8" fill="rgb(150,150,150)"/><rect x="99" y="16" width="9" height="8" fill="rgb(180,180,180)"/><rect x="108" y="16" width="9" height="8" fill="rgb(160,160,160)"/><rect x="117" y="16" width="9" height="8" fill="rgb(180,180,180)"/><rect x="126" y="16" width="9" height="8" fill="rgb(215,215,215)"/><rect x="135" y="16" width="9" height="8" fill="rgb(170,170,170)"/><rect x="144" y="16" width="9" height="8" fill="rgb(160,160,160)"/><rect x="153" y="16" width="9" height="8" fill="rgb(200,200,200)"/><rect x="162" y="16" width="9" height="8" fill="rgb(235,235,235)"/><rect x="0" y="24" width="9" height="8" fill="rgb(150,150,150)"/><rect x="9" y="24" width="9" height="8" fill="rgb(160,160,160)"/><rect x="18" y="24" width="9" height="8" fill="rgb(150,150,150)"/><rect x="27" y="24" width="9" height="8" fill="rgb(235,235,235)"/><rect x="36" y="24" width="9" height="8" fill="rgb(170,170,170)"/><rect x="45" y="24" width="9" height="8" fill="rgb(225,225,225)"/><rect x="54" y="24" width="9" height="8" fill="rgb(160,160,160)"/><rect x="63" y="24" width="9" height="8" fill="rgb(200,200,200)"/><rect x="72" y="24" width="9" height="8" fill="rgb(235,235,235)"/><rect x="81" y="24" width="9" height="8" fill="rgb(150,150,150)"/><rect x="90" y="24" width="9" height="8" fill="rgb(160,160,160)"/><rect x="99" y="24" width="9" height="8" fill="rgb(180,180,180)"/><rect x="108" y="24" width="9" height="8" fill="rgb(235,235,235)"/><rect x="117" y="24" width="9" height="8" fill="rgb(205,205,205)"/><rect x="126" y="24" width="9" height="8" fill="rgb(170,170,170)"/><rect x="135" y="24" width="9" height="8" fill="rgb(245,245,245)"/><rect x="144" y="24" width="9" height="8" fill="rgb(190,190,190)"/><rect x="153" y="24" width="9" height="8" fill="rgb(200,200,200)"/><rect x="162" y="24" width="9" height="8" fill="rgb(235,235,235)"/></svg>
<div class="cell" style="left:913px;top:442px">80.00</div>
<div class="cell" style="left:1095px;top:442px">2026-01-15 08:30:00</div>
<div class="cell" style="left:1497px;top:442px">2026-01-23 16:00:00</div>
<div class="cell" style="left:1899px;top:442px">2026-01-26 00:00:00</div>
<div class="sw on" style="left:2302px;top:434px"><div class="st">启用</div><div class="k"></div></div>
<div class="sw on" style="left:2484px;top:434px"><div class="st">开启</div><div class="k"></div></div>
<div class="cell" style="left:2667px;top:442px">2026-01-01</div>
<div class="cb" style="left:32px;top:517px"></div>
<div class="cell" style="left:130px;top:520px">126</div>
<div class="cell" style="right:2126px;top:520px">股集团有限公司工作人...</div>
<div class="cell" style="left:313px;top:520px">2025年</div>
<svg class="a" style="left:403px;top:517px;filter:blur(0.8px)" width="136" height="32" viewBox="0 0 136 32" preserveAspectRatio="none"><rect x="0" y="0" width="9" height="8" fill="rgb(200,200,200)"/><rect x="9" y="0" width="9" height="8" fill="rgb(215,215,215)"/><rect x="18" y="0" width="9" height="8" fill="rgb(160,160,160)"/><rect x="27" y="0" width="9" height="8" fill="rgb(160,160,160)"/><rect x="36" y="0" width="9" height="8" fill="rgb(215,215,215)"/><rect x="45" y="0" width="9" height="8" fill="rgb(215,215,215)"/><rect x="54" y="0" width="9" height="8" fill="rgb(215,215,215)"/><rect x="63" y="0" width="9" height="8" fill="rgb(215,215,215)"/><rect x="72" y="0" width="9" height="8" fill="rgb(190,190,190)"/><rect x="81" y="0" width="9" height="8" fill="rgb(160,160,160)"/><rect x="90" y="0" width="9" height="8" fill="rgb(170,170,170)"/><rect x="99" y="0" width="9" height="8" fill="rgb(160,160,160)"/><rect x="108" y="0" width="9" height="8" fill="rgb(200,200,200)"/><rect x="117" y="0" width="9" height="8" fill="rgb(190,190,190)"/><rect x="126" y="0" width="9" height="8" fill="rgb(215,215,215)"/><rect x="135" y="0" width="9" height="8" fill="rgb(170,170,170)"/><rect x="0" y="8" width="9" height="8" fill="rgb(225,225,225)"/><rect x="9" y="8" width="9" height="8" fill="rgb(150,150,150)"/><rect x="18" y="8" width="9" height="8" fill="rgb(180,180,180)"/><rect x="27" y="8" width="9" height="8" fill="rgb(225,225,225)"/><rect x="36" y="8" width="9" height="8" fill="rgb(200,200,200)"/><rect x="45" y="8" width="9" height="8" fill="rgb(170,170,170)"/><rect x="54" y="8" width="9" height="8" fill="rgb(225,225,225)"/><rect x="63" y="8" width="9" height="8" fill="rgb(150,150,150)"/><rect x="72" y="8" width="9" height="8" fill="rgb(225,225,225)"/><rect x="81" y="8" width="9" height="8" fill="rgb(190,190,190)"/><rect x="90" y="8" width="9" height="8" fill="rgb(245,245,245)"/><rect x="99" y="8" width="9" height="8" fill="rgb(160,160,160)"/><rect x="108" y="8" width="9" height="8" fill="rgb(190,190,190)"/><rect x="117" y="8" width="9" height="8" fill="rgb(225,225,225)"/><rect x="126" y="8" width="9" height="8" fill="rgb(200,200,200)"/><rect x="135" y="8" width="9" height="8" fill="rgb(170,170,170)"/><rect x="0" y="16" width="9" height="8" fill="rgb(200,200,200)"/><rect x="9" y="16" width="9" height="8" fill="rgb(180,180,180)"/><rect x="18" y="16" width="9" height="8" fill="rgb(225,225,225)"/><rect x="27" y="16" width="9" height="8" fill="rgb(225,225,225)"/><rect x="36" y="16" width="9" height="8" fill="rgb(225,225,225)"/><rect x="45" y="16" width="9" height="8" fill="rgb(200,200,200)"/><rect x="54" y="16" width="9" height="8" fill="rgb(245,245,245)"/><rect x="63" y="16" width="9" height="8" fill="rgb(180,180,180)"/><rect x="72" y="16" width="9" height="8" fill="rgb(235,235,235)"/><rect x="81" y="16" width="9" height="8" fill="rgb(180,180,180)"/><rect x="90" y="16" width="9" height="8" fill="rgb(180,180,180)"/><rect x="99" y="16" width="9" height="8" fill="rgb(205,205,205)"/><rect x="108" y="16" width="9" height="8" fill="rgb(180,180,180)"/><rect x="117" y="16" width="9" height="8" fill="rgb(180,180,180)"/><rect x="126" y="16" width="9" height="8" fill="rgb(225,225,225)"/><rect x="135" y="16" width="9" height="8" fill="rgb(215,215,215)"/><rect x="0" y="24" width="9" height="8" fill="rgb(200,200,200)"/><rect x="9" y="24" width="9" height="8" fill="rgb(150,150,150)"/><rect x="18" y="24" width="9" height="8" fill="rgb(150,150,150)"/><rect x="27" y="24" width="9" height="8" fill="rgb(190,190,190)"/><rect x="36" y="24" width="9" height="8" fill="rgb(215,215,215)"/><rect x="45" y="24" width="9" height="8" fill="rgb(190,190,190)"/><rect x="54" y="24" width="9" height="8" fill="rgb(180,180,180)"/><rect x="63" y="24" width="9" height="8" fill="rgb(235,235,235)"/><rect x="72" y="24" width="9" height="8" fill="rgb(200,200,200)"/><rect x="81" y="24" width="9" height="8" fill="rgb(215,215,215)"/><rect x="90" y="24" width="9" height="8" fill="rgb(200,200,200)"/><rect x="99" y="24" width="9" height="8" fill="rgb(200,200,200)"/><rect x="108" y="24" width="9" height="8" fill="rgb(160,160,160)"/><rect x="117" y="24" width="9" height="8" fill="rgb(180,180,180)"/><rect x="126" y="24" width="9" height="8" fill="rgb(160,160,160)"/><rect x="135" y="24" width="9" height="8" fill="rgb(180,180,180)"/></svg>
<div class="cell" style="left:913px;top:520px">0.00</div>
<div class="cell" style="left:1095px;top:520px">2025-12-31 11:48:13</div>
<div class="cell" style="left:1497px;top:520px">2026-01-12 17:00:00</div>
<div class="cell" style="left:1899px;top:520px">2026-01-13 00:00:00</div>
<div class="sw on" style="left:2302px;top:512px"><div class="st">启用</div><div class="k"></div></div>
<div class="sw on" style="left:2484px;top:512px"><div class="st">开启</div><div class="k"></div></div>
<div class="cell" style="left:2667px;top:520px">2026-01-01</div>
<div class="cb" style="left:32px;top:595px"></div>
<div class="cell" style="left:130px;top:598px">125</div>
<div class="cell" style="right:2126px;top:598px">集团有限公司工作人...</div>
<div class="cell" style="left:313px;top:598px">2025年</div>
<svg class="a" style="left:403px;top:595px;filter:blur(0.8px)" width="176" height="32" viewBox="0 0 176 32" preserveAspectRatio="none"><rect x="0" y="0" width="9" height="8" fill="rgb(215,215,215)"/><rect x="9" y="0" width="9" height="8" fill="rgb(180,180,180)"/><rect x="18" y="0" width="9" height="8" fill="rgb(200,200,200)"/><rect x="27" y="0" width="9" height="8" fill="rgb(180,180,180)"/><rect x="36" y="0" width="9" height="8" fill="rgb(215,215,215)"/><rect x="45" y="0" width="9" height="8" fill="rgb(235,235,235)"/><rect x="54" y="0" width="9" height="8" fill="rgb(235,235,235)"/><rect x="63" y="0" width="9" height="8" fill="rgb(150,150,150)"/><rect x="72" y="0" width="9" height="8" fill="rgb(215,215,215)"/><rect x="81" y="0" width="9" height="8" fill="rgb(245,245,245)"/><rect x="90" y="0" width="9" height="8" fill="rgb(200,200,200)"/><rect x="99" y="0" width="9" height="8" fill="rgb(245,245,245)"/><rect x="108" y="0" width="9" height="8" fill="rgb(160,160,160)"/><rect x="117" y="0" width="9" height="8" fill="rgb(245,245,245)"/><rect x="126" y="0" width="9" height="8" fill="rgb(160,160,160)"/><rect x="135" y="0" width="9" height="8" fill="rgb(205,205,205)"/><rect x="144" y="0" width="9" height="8" fill="rgb(180,180,180)"/><rect x="153" y="0" width="9" height="8" fill="rgb(215,215,215)"/><rect x="162" y="0" width="9" height="8" fill="rgb(170,170,170)"/><rect x="171" y="0" width="9" height="8" fill="rgb(205,205,205)"/><rect x="0" y="8" width="9" height="8" fill="rgb(245,245,245)"/><rect x="9" y="8" width="9" height="8" fill="rgb(200,200,200)"/><rect x="18" y="8" width="9" height="8" fill="rgb(160,160,160)"/><rect x="27" y="8" width="9" height="8" fill="rgb(205,205,205)"/><rect x="36" y="8" width="9" height="8" fill="rgb(215,215,215)"/><rect x="45" y="8" width="9" height="8" fill="rgb(205,205,205)"/><rect x="54" y="8" width="9" height="8" fill="rgb(160,160,160)"/><rect x="63" y="8" width="9" height="8" fill="rgb(170,170,170)"/><rect x="72" y="8" width="9" height="8" fill="rgb(170,170,170)"/><rect x="81" y="8" width="9" height="8" fill="rgb(170,170,170)"/><rect x="90" y="8" width="9" height="8" fill="rgb(150,150,150)"/><rect x="99" y="8" width="9" height="8" fill="rgb(170,170,170)"/><rect x="108" y="8" width="9" height="8" fill="rgb(235,235,235)"/><rect x="117" y="8" width="9" height="8" fill="rgb(215,215,215)"/><rect x="126" y="8" width="9" height="8" fill="rgb(245,245,245)"/><rect x="135" y="8" width="9" height="8" fill="rgb(170,170,170)"/><rect x="144" y="8" width="9" height="8" fill="rgb(235,235,235)"/><rect x="153" y="8" width="9" height="8" fill="rgb(235,235,235)"/><rect x="162" y="8" width="9" height="8" fill="rgb(215,215,215)"/><rect x="171" y="8" width="9" height="8" fill="rgb(245,245,245)"/><rect x="0" y="16" width="9" height="8" fill="rgb(200,200,200)"/><rect x="9" y="16" width="9" height="8" fill="rgb(170,170,170)"/><rect x="18" y="16" width="9" height="8" fill="rgb(225,225,225)"/><rect x="27" y="16" width="9" height="8" fill="rgb(225,225,225)"/><rect x="36" y="16" width="9" height="8" fill="rgb(170,170,170)"/><rect x="45" y="16" width="9" height="8" fill="rgb(150,150,150)"/><rect x="54" y="16" width="9" height="8" fill="rgb(150,150,150)"/><rect x="63" y="16" width="9" height="8" fill="rgb(245,245,245)"/><rect x="72" y="16" width="9" height="8" fill="rgb(160,160,160)"/><rect x="81" y="16" width="9" height="8" fill="rgb(225,225,225)"/><rect x="90" y="16" width="9" height="8" fill="rgb(170,170,170)"/><rect x="99" y="16" width="9" height="8" fill="rgb(205,205,205)"/><rect x="108" y="16" width="9" height="8" fill="rgb(180,180,180)"/><rect x="117" y="16" width="9" height="8" fill="rgb(180,180,180)"/><rect x="126" y="16" width="9" height="8" fill="rgb(150,150,150)"/><rect x="135" y="16" width="9" height="8" fill="rgb(190,190,190)"/><rect x="144" y="16" width="9" height="8" fill="rgb(180,180,180)"/><rect x="153" y="16" width="9" height="8" fill="rgb(190,190,190)"/><rect x="162" y="16" width="9" height="8" fill="rgb(225,225,225)"/><rect x="171" y="16" width="9" height="8" fill="rgb(180,180,180)"/><rect x="0" y="24" width="9" height="8" fill="rgb(235,235,235)"/><rect x="9" y="24" width="9" height="8" fill="rgb(200,200,200)"/><rect x="18" y="24" width="9" height="8" fill="rgb(190,190,190)"/><rect x="27" y="24" width="9" height="8" fill="rgb(225,225,225)"/><rect x="36" y="24" width="9" height="8" fill="rgb(205,205,205)"/><rect x="45" y="24" width="9" height="8" fill="rgb(170,170,170)"/><rect x="54" y="24" width="9" height="8" fill="rgb(150,150,150)"/><rect x="63" y="24" width="9" height="8" fill="rgb(200,200,200)"/><rect x="72" y="24" width="9" height="8" fill="rgb(215,215,215)"/><rect x="81" y="24" width="9" height="8" fill="rgb(245,245,245)"/><rect x="90" y="24" width="9" height="8" fill="rgb(235,235,235)"/><rect x="99" y="24" width="9" height="8" fill="rgb(225,225,225)"/><rect x="108" y="24" width="9" height="8" fill="rgb(205,205,205)"/><rect x="117" y="24" width="9" height="8" fill="rgb(225,225,225)"/><rect x="126" y="24" width="9" height="8" fill="rgb(170,170,170)"/><rect x="135" y="24" width="9" height="8" fill="rgb(225,225,225)"/><rect x="144" y="24" width="9" height="8" fill="rgb(170,170,170)"/><rect x="153" y="24" width="9" height="8" fill="rgb(225,225,225)"/><rect x="162" y="24" width="9" height="8" fill="rgb(225,225,225)"/><rect x="171" y="24" width="9" height="8" fill="rgb(150,150,150)"/></svg>
<div class="cell" style="left:913px;top:598px">0.00</div>
<div class="cell" style="left:1095px;top:598px">2025-12-31 11:47:25</div>
<div class="cell" style="left:1497px;top:598px">2026-01-12 17:00:00</div>
<div class="cell" style="left:1899px;top:598px">2026-01-13 00:00:00</div>
<div class="sw on" style="left:2302px;top:590px"><div class="st">启用</div><div class="k"></div></div>
<div class="sw on" style="left:2484px;top:590px"><div class="st">开启</div><div class="k"></div></div>
<div class="cell" style="left:2667px;top:598px">2026-01-01</div>
<div class="cb" style="left:32px;top:673px"></div>
<div class="cell" style="left:130px;top:676px">124</div>
<div class="cell" style="right:2126px;top:676px">业集团有限公司公开...</div>
<div class="cell" style="left:313px;top:676px">2025年</div>
<svg class="a" style="left:403px;top:673px;filter:blur(0.8px)" width="183" height="32" viewBox="0 0 183 32" preserveAspectRatio="none"><rect x="0" y="0" width="9" height="8" fill="rgb(215,215,215)"/><rect x="9" y="0" width="9" height="8" fill="rgb(170,170,170)"/><rect x="18" y="0" width="9" height="8" fill="rgb(235,235,235)"/><rect x="27" y="0" width="9" height="8" fill="rgb(150,150,150)"/><rect x="36" y="0" width="9" height="8" fill="rgb(170,170,170)"/><rect x="45" y="0" width="9" height="8" fill="rgb(170,170,170)"/><rect x="54" y="0" width="9" height="8" fill="rgb(170,170,170)"/><rect x="63" y="0" width="9" height="8" fill="rgb(215,215,215)"/><rect x="72" y="0" width="9" height="8" fill="rgb(235,235,235)"/><rect x="81" y="0" width="9" height="8" fill="rgb(160,160,160)"/><rect x="90" y="0" width="9" height="8" fill="rgb(225,225,225)"/><rect x="99" y="0" width="9" height="8" fill="rgb(150,150,150)"/><rect x="108" y="0" width="9" height="8" fill="rgb(200,200,200)"/><rect x="117" y="0" width="9" height="8" fill="rgb(245,245,245)"/><rect x="126" y="0" width="9" height="8" fill="rgb(225,225,225)"/><rect x="135" y="0" width="9" height="8" fill="rgb(225,225,225)"/><rect x="144" y="0" width="9" height="8" fill="rgb(225,225,225)"/><rect x="153" y="0" width="9" height="8" fill="rgb(215,215,215)"/><rect x="162" y="0" width="9" height="8" fill="rgb(160,160,160)"/><rect x="171" y="0" width="9" height="8" fill="rgb(225,225,225)"/><rect x="180" y="0" width="9" height="8" fill="rgb(150,150,150)"/><rect x="0" y="8" width="9" height="8" fill="rgb(180,180,180)"/><rect x="9" y="8" width="9" height="8" fill="rgb(180,180,180)"/><rect x="18" y="8" width="9" height="8" fill="rgb(190,190,190)"/><rect x="27" y="8" width="9" height="8" fill="rgb(150,150,150)"/><rect x="36" y="8" width="9" height="8" fill="rgb(160,160,160)"/><rect x="45" y="8" width="9" height="8" fill="rgb(225,225,225)"/><rect x="54" y="8" width="9" height="8" fill="rgb(215,215,215)"/><rect x="63" y="8" width="9" height="8" fill="rgb(225,225,225)"/><rect x="72" y="8" width="9" height="8" fill="rgb(150,150,150)"/><rect x="81" y="8" width="9" height="8" fill="rgb(160,160,160)"/><rect x="90" y="8" width="9" height="8" fill="rgb(215,215,215)"/><rect x="99" y="8" width="9" height="8" fill="rgb(200,200,200)"/><rect x="108" y="8" width="9" height="8" fill="rgb(235,235,235)"/><rect x="117" y="8" width="9" height="8" fill="rgb(225,225,225)"/><rect x="126" y="8" width="9" height="8" fill="rgb(235,235,235)"/><rect x="135" y="8" width="9" height="8" fill="rgb(225,225,225)"/><rect x="144" y="8" width="9" height="8" fill="rgb(180,180,180)"/><rect x="153" y="8" width="9" height="8" fill="rgb(190,190,190)"/><rect x="162" y="8" width="9" height="8" fill="rgb(215,215,215)"/><rect x="171" y="8" width="9" height="8" fill="rgb(225,225,225)"/><rect x="180" y="8" width="9" height="8" fill="rgb(225,225,225)"/><rect x="0" y="16" width="9" height="8" fill="rgb(215,215,215)"/><rect x="9" y="16" width="9" height="8" fill="rgb(225,225,225)"/><rect x="18" y="16" width="9" height="8" fill="rgb(180,180,180)"/><rect x="27" y="16" width="9" height="8" fill="rgb(225,225,225)"/><rect x="36" y="16" width="9" height="8" fill="rgb(190,190,190)"/><rect x="45" y="16" width="9" height="8" fill="rgb(225,225,225)"/><rect x="54" y="16" width="9" height="8" fill="rgb(180,180,180)"/><rect x="63" y="16" width="9" height="8" fill="rgb(215,215,215)"/><rect x="72" y="16" width="9" height="8" fill="rgb(170,170,170)"/><rect x="81" y="16" width="9" height="8" fill="rgb(205,205,205)"/><rect x="90" y="16" width="9" height="8" fill="rgb(160,160,160)"/><rect x="99" y="16" width="9" height="8" fill="rgb(205,205,205)"/><rect x="108" y="16" width="9" height="8" fill="rgb(215,215,215)"/><rect x="117" y="16" width="9" height="8" fill="rgb(200,200,200)"/><rect x="126" y="16" width="9" height="8" fill="rgb(160,160,160)"/><rect x="135" y="16" width="9" height="8" fill="rgb(245,245,245)"/><rect x="144" y="16" width="9" height="8" fill="rgb(180,180,180)"/><rect x="153" y="16" width="9" height="8" fill="rgb(205,205,205)"/><rect x="162" y="16" width="9" height="8" fill="rgb(160,160,160)"/><rect x="171" y="16" width="9" height="8" fill="rgb(180,180,180)"/><rect x="180" y="16" width="9" height="8" fill="rgb(245,245,245)"/><rect x="0" y="24" width="9" height="8" fill="rgb(190,190,190)"/><rect x="9" y="24" width="9" height="8" fill="rgb(160,160,160)"/><rect x="18" y="24" width="9" height="8" fill="rgb(170,170,170)"/><rect x="27" y="24" width="9" height="8" fill="rgb(245,245,245)"/><rect x="36" y="24" width="9" height="8" fill="rgb(245,245,245)"/><rect x="45" y="24" width="9" height="8" fill="rgb(200,200,200)"/><rect x="54" y="24" width="9" height="8" fill="rgb(170,170,170)"/><rect x="63" y="24" width="9" height="8" fill="rgb(190,190,190)"/><rect x="72" y="24" width="9" height="8" fill="rgb(170,170,170)"/><rect x="81" y="24" width="9" height="8" fill="rgb(215,215,215)"/><rect x="90" y="24" width="9" height="8" fill="rgb(180,180,180)"/><rect x="99" y="24" width="9" height="8" fill="rgb(160,160,160)"/><rect x="108" y="24" width="9" height="8" fill="rgb(205,205,205)"/><rect x="117" y="24" width="9" height="8" fill="rgb(215,215,215)"/><rect x="126" y="24" width="9" height="8" fill="rgb(170,170,170)"/><rect x="135" y="24" width="9" height="8" fill="rgb(245,245,245)"/><rect x="144" y="24" width="9" height="8" fill="rgb(180,180,180)"/><rect x="153" y="24" width="9" height="8" fill="rgb(170,170,170)"/><rect x="162" y="24" width="9" height="8" fill="rgb(205,205,205)"/><rect x="171" y="24" width="9" height="8" fill="rgb(225,225,225)"/><rect x="180" y="24" width="9" height="8" fill="rgb(205,205,205)"/></svg>
<div class="cell" style="left:913px;top:676px">80.00</div>
<div class="cell" style="left:1095px;top:676px">2025-12-17 16:32:37</div>
<div class="cell" style="left:1497px;top:676px">2025-12-25 16:00:00</div>
<div class="cell" style="left:1899px;top:676px">2025-12-27 00:00:00</div>
<div class="sw on" style="left:2302px;top:668px"><div class="st">启用</div><div class="k"></div></div>
<div class="sw off" style="left:2484px;top:668px"><div class="k"></div><div class="st">关闭</div></div>
<div class="cell" style="left:2667px;top:676px">2025-01-01</div>
<div class="cb" style="left:32px;top:751px"></div>
<div class="cell" style="left:130px;top:754px">123</div>
<div class="cell" style="right:2126px;top:754px">发展有限公司招聘...</div>
<div class="cell" style="left:313px;top:754px">2025年</div>
<svg class="a" style="left:403px;top:751px;filter:blur(0.8px)" width="192" height="32" viewBox="0 0 192 32" preserveAspectRatio="none"><rect x="0" y="0" width="9" height="8" fill="rgb(200,200,200)"/><rect x="9" y="0" width="9" height="8" fill="rgb(205,205,205)"/><rect x="18" y="0" width="9" height="8" fill="rgb(180,180,180)"/><rect x="27" y="0" width="9" height="8" fill="rgb(200,200,200)"/><rect x="36" y="0" width="9" height="8" fill="rgb(200,200,200)"/><rect x="45" y="0" width="9" height="8" fill="rgb(160,160,160)"/><rect x="54" y="0" width="9" height="8" fill="rgb(200,200,200)"/><rect x="63" y="0" width="9" height="8" fill="rgb(150,150,150)"/><rect x="72" y="0" width="9" height="8" fill="rgb(200,200,200)"/><rect x="81" y="0" width="9" height="8" fill="rgb(225,225,225)"/><rect x="90" y="0" width="9" height="8" fill="rgb(215,215,215)"/><rect x="99" y="0" width="9" height="8" fill="rgb(215,215,215)"/><rect x="108" y="0" width="9" height="8" fill="rgb(150,150,150)"/><rect x="117" y="0" width="9" height="8" fill="rgb(205,205,205)"/><rect x="126" y="0" width="9" height="8" fill="rgb(200,200,200)"/><rect x="135" y="0" width="9" height="8" fill="rgb(225,225,225)"/><rect x="144" y="0" width="9" height="8" fill="rgb(235,235,235)"/><rect x="153" y="0" width="9" height="8" fill="rgb(190,190,190)"/><rect x="162" y="0" width="9" height="8" fill="rgb(225,225,225)"/><rect x="171" y="0" width="9" height="8" fill="rgb(160,160,160)"/><rect x="180" y="0" width="9" height="8" fill="rgb(160,160,160)"/><rect x="189" y="0" width="9" height="8" fill="rgb(180,180,180)"/><rect x="0" y="8" width="9" height="8" fill="rgb(160,160,160)"/><rect x="9" y="8" width="9" height="8" fill="rgb(160,160,160)"/><rect x="18" y="8" width="9" height="8" fill="rgb(190,190,190)"/><rect x="27" y="8" width="9" height="8" fill="rgb(190,190,190)"/><rect x="36" y="8" width="9" height="8" fill="rgb(150,150,150)"/><rect x="45" y="8" width="9" height="8" fill="rgb(170,170,170)"/><rect x="54" y="8" width="9" height="8" fill="rgb(190,190,190)"/><rect x="63" y="8" width="9" height="8" fill="rgb(170,170,170)"/><rect x="72" y="8" width="9" height="8" fill="rgb(205,205,205)"/><rect x="81" y="8" width="9" height="8" fill="rgb(245,245,245)"/><rect x="90" y="8" width="9" height="8" fill="rgb(190,190,190)"/><rect x="99" y="8" width="9" height="8" fill="rgb(205,205,205)"/><rect x="108" y="8" width="9" height="8" fill="rgb(170,170,170)"/><rect x="117" y="8" width="9" height="8" fill="rgb(225,225,225)"/><rect x="126" y="8" width="9" height="8" fill="rgb(225,225,225)"/><rect x="135" y="8" width="9" height="8" fill="rgb(235,235,235)"/><rect x="144" y="8" width="9" height="8" fill="rgb(215,215,215)"/><rect x="153" y="8" width="9" height="8" fill="rgb(200,200,200)"/><rect x="162" y="8" width="9" height="8" fill="rgb(160,160,160)"/><rect x="171" y="8" width="9" height="8" fill="rgb(190,190,190)"/><rect x="180" y="8" width="9" height="8" fill="rgb(150,150,150)"/><rect x="189" y="8" width="9" height="8" fill="rgb(170,170,170)"/><rect x="0" y="16" width="9" height="8" fill="rgb(205,205,205)"/><rect x="9" y="16" width="9" height="8" fill="rgb(160,160,160)"/><rect x="18" y="16" width="9" height="8" fill="rgb(190,190,190)"/><rect x="27" y="16" width="9" height="8" fill="rgb(150,150,150)"/><rect x="36" y="16" width="9" height="8" fill="rgb(245,245,245)"/><rect x="45" y="16" width="9" height="8" fill="rgb(160,160,160)"/><rect x="54" y="16" width="9" height="8" fill="rgb(190,190,190)"/><rect x="63" y="16" width="9" height="8" fill="rgb(160,160,160)"/><rect x="72" y="16" width="9" height="8" fill="rgb(235,235,235)"/><rect x="81" y="16" width="9" height="8" fill="rgb(180,180,180)"/><rect x="90" y="16" width="9" height="8" fill="rgb(160,160,160)"/><rect x="99" y="16" width="9" height="8" fill="rgb(190,190,190)"/><rect x="108" y="16" width="9" height="8" fill="rgb(160,160,160)"/><rect x="117" y="16" width="9" height="8" fill="rgb(215,215,215)"/><rect x="126" y="16" width="9" height="8" fill="rgb(150,150,150)"/><rect x="135" y="16" width="9" height="8" fill="rgb(200,200,200)"/><rect x="144" y="16" width="9" height="8" fill="rgb(225,225,225)"/><rect x="153" y="16" width="9" height="8" fill="rgb(205,205,205)"/><rect x="162" y="16" width="9" height="8" fill="rgb(190,190,190)"/><rect x="171" y="16" width="9" height="8" fill="rgb(235,235,235)"/><rect x="180" y="16" width="9" height="8" fill="rgb(170,170,170)"/><rect x="189" y="16" width="9" height="8" fill="rgb(150,150,150)"/><rect x="0" y="24" width="9" height="8" fill="rgb(225,225,225)"/><rect x="9" y="24" width="9" height="8" fill="rgb(180,180,180)"/><rect x="18" y="24" width="9" height="8" fill="rgb(160,160,160)"/><rect x="27" y="24" width="9" height="8" fill="rgb(170,170,170)"/><rect x="36" y="24" width="9" height="8" fill="rgb(190,190,190)"/><rect x="45" y="24" width="9" height="8" fill="rgb(150,150,150)"/><rect x="54" y="24" width="9" height="8" fill="rgb(170,170,170)"/><rect x="63" y="24" width="9" height="8" fill="rgb(180,180,180)"/><rect x="72" y="24" width="9" height="8" fill="rgb(190,190,190)"/><rect x="81" y="24" width="9" height="8" fill="rgb(245,245,245)"/><rect x="90" y="24" width="9" height="8" fill="rgb(190,190,190)"/><rect x="99" y="24" width="9" height="8" fill="rgb(225,225,225)"/><rect x="108" y="24" width="9" height="8" fill="rgb(180,180,180)"/><rect x="117" y="24" width="9" height="8" fill="rgb(190,190,190)"/><rect x="126" y="24" width="9" height="8" fill="rgb(215,215,215)"/><rect x="135" y="24" width="9" height="8" fill="rgb(225,225,225)"/><rect x="144" y="24" width="9" height="8" fill="rgb(245,245,245)"/><rect x="153" y="24" width="9" height="8" fill="rgb(170,170,170)"/><rect x="162" y="24" width="9" height="8" fill="rgb(190,190,190)"/><rect x="171" y="24" width="9" height="8" fill="rgb(200,200,200)"/><rect x="180" y="24" width="9" height="8" fill="rgb(150,150,150)"/><rect x="189" y="24" width="9" height="8" fill="rgb(190,190,190)"/></svg>
<div class="cell" style="left:913px;top:754px">80.00</div>
<div class="cell" style="left:1095px;top:754px">2025-12-05 11:14:01</div>
<div class="cell" style="left:1497px;top:754px">2026-01-28 16:00:00</div>
<div class="cell" style="left:1899px;top:754px">2026-01-31 16:00:00</div>
<div class="sw off" style="left:2302px;top:746px"><div class="k"></div><div class="st">归档</div></div>
<div class="sw on" style="left:2484px;top:746px"><div class="st">开启</div><div class="k"></div></div>
<div class="cell" style="left:2667px;top:754px">2026-01-01</div>
<div class="cb" style="left:32px;top:829px"></div>
<div class="cell" style="left:130px;top:832px">122</div>
<div class="cell" style="right:2126px;top:832px">租赁服务有限公司面...</div>
<div class="cell" style="left:313px;top:832px">2025年</div>
<svg class="a" style="left:403px;top:829px;filter:blur(0.8px)" width="168" height="32" viewBox="0 0 168 32" preserveAspectRatio="none"><rect x="0" y="0" width="9" height="8" fill="rgb(150,150,150)"/><rect x="9" y="0" width="9" height="8" fill="rgb(150,150,150)"/><rect x="18" y="0" width="9" height="8" fill="rgb(150,150,150)"/><rect x="27" y="0" width="9" height="8" fill="rgb(225,225,225)"/><rect x="36" y="0" width="9" height="8" fill="rgb(225,225,225)"/><rect x="45" y="0" width="9" height="8" fill="rgb(180,180,180)"/><rect x="54" y="0" width="9" height="8" fill="rgb(225,225,225)"/><rect x="63" y="0" width="9" height="8" fill="rgb(215,215,215)"/><rect x="72" y="0" width="9" height="8" fill="rgb(180,180,180)"/><rect x="81" y="0" width="9" height="8" fill="rgb(215,215,215)"/><rect x="90" y="0" width="9" height="8" fill="rgb(160,160,160)"/><rect x="99" y="0" width="9" height="8" fill="rgb(245,245,245)"/><rect x="108" y="0" width="9" height="8" fill="rgb(245,245,245)"/><rect x="117" y="0" width="9" height="8" fill="rgb(205,205,205)"/><rect x="126" y="0" width="9" height="8" fill="rgb(245,245,245)"/><rect x="135" y="0" width="9" height="8" fill="rgb(215,215,215)"/><rect x="144" y="0" width="9" height="8" fill="rgb(225,225,225)"/><rect x="153" y="0" width="9" height="8" fill="rgb(205,205,205)"/><rect x="162" y="0" width="9" height="8" fill="rgb(225,225,225)"/><rect x="0" y="8" width="9" height="8" fill="rgb(190,190,190)"/><rect x="9" y="8" width="9" height="8" fill="rgb(180,180,180)"/><rect x="18" y="8" width="9" height="8" fill="rgb(180,180,180)"/><rect x="27" y="8" width="9" height="8" fill="rgb(200,200,200)"/><rect x="36" y="8" width="9" height="8" fill="rgb(180,180,180)"/><rect x="45" y="8" width="9" height="8" fill="rgb(245,245,245)"/><rect x="54" y="8" width="9" height="8" fill="rgb(170,170,170)"/><rect x="63" y="8" width="9" height="8" fill="rgb(205,205,205)"/><rect x="72" y="8" width="9" height="8" fill="rgb(200,200,200)"/><rect x="81" y="8" width="9" height="8" fill="rgb(150,150,150)"/><rect x="90" y="8" width="9" height="8" fill="rgb(170,170,170)"/><rect x="99" y="8" width="9" height="8" fill="rgb(150,150,150)"/><rect x="108" y="8" width="9" height="8" fill="rgb(160,160,160)"/><rect x="117" y="8" width="9" height="8" fill="rgb(245,245,245)"/><rect x="126" y="8" width="9" height="8" fill="rgb(190,190,190)"/><rect x="135" y="8" width="9" height="8" fill="rgb(205,205,205)"/><rect x="144" y="8" width="9" height="8" fill="rgb(170,170,170)"/><rect x="153" y="8" width="9" height="8" fill="rgb(150,150,150)"/><rect x="162" y="8" width="9" height="8" fill="rgb(160,160,160)"/><rect x="0" y="16" width="9" height="8" fill="rgb(245,245,245)"/><rect x="9" y="16" width="9" height="8" fill="rgb(205,205,205)"/><rect x="18" y="16" width="9" height="8" fill="rgb(225,225,225)"/><rect x="27" y="16" width="9" height="8" fill="rgb(245,245,245)"/><rect x="36" y="16" width="9" height="8" fill="rgb(190,190,190)"/><rect x="45" y="16" width="9" height="8" fill="rgb(235,235,235)"/><rect x="54" y="16" width="9" height="8" fill="rgb(180,180,180)"/><rect x="63" y="16" width="9" height="8" fill="rgb(190,190,190)"/><rect x="72" y="16" width="9" height="8" fill="rgb(150,150,150)"/><rect x="81" y="16" width="9" height="8" fill="rgb(215,215,215)"/><rect x="90" y="16" width="9" height="8" fill="rgb(170,170,170)"/><rect x="99" y="16" width="9" height="8" fill="rgb(170,170,170)"/><rect x="108" y="16" width="9" height="8" fill="rgb(190,190,190)"/><rect x="117" y="16" width="9" height="8" fill="rgb(215,215,215)"/><rect x="126" y="16" width="9" height="8" fill="rgb(150,150,150)"/><rect x="135" y="16" width="9" height="8" fill="rgb(190,190,190)"/><rect x="144" y="16" width="9" height="8" fill="rgb(200,200,200)"/><rect x="153" y="16" width="9" height="8" fill="rgb(200,200,200)"/><rect x="162" y="16" width="9" height="8" fill="rgb(225,225,225)"/><rect x="0" y="24" width="9" height="8" fill="rgb(200,200,200)"/><rect x="9" y="24" width="9" height="8" fill="rgb(180,180,180)"/><rect x="18" y="24" width="9" height="8" fill="rgb(150,150,150)"/><rect x="27" y="24" width="9" height="8" fill="rgb(190,190,190)"/><rect x="36" y="24" width="9" height="8" fill="rgb(180,180,180)"/><rect x="45" y="24" width="9" height="8" fill="rgb(200,200,200)"/><rect x="54" y="24" width="9" height="8" fill="rgb(170,170,170)"/><rect x="63" y="24" width="9" height="8" fill="rgb(150,150,150)"/><rect x="72" y="24" width="9" height="8" fill="rgb(200,200,200)"/><rect x="81" y="24" width="9" height="8" fill="rgb(205,205,205)"/><rect x="90" y="24" width="9" height="8" fill="rgb(160,160,160)"/><rect x="99" y="24" width="9" height="8" fill="rgb(215,215,215)"/><rect x="108" y="24" width="9" height="8" fill="rgb(190,190,190)"/><rect x="117" y="24" width="9" height="8" fill="rgb(225,225,225)"/><rect x="126" y="24" width="9" height="8" fill="rgb(245,245,245)"/><rect x="135" y="24" width="9" height="8" fill="rgb(180,180,180)"/><rect x="144" y="24" width="9" height="8" fill="rgb(180,180,180)"/><rect x="153" y="24" width="9" height="8" fill="rgb(225,225,225)"/><rect x="162" y="24" width="9" height="8" fill="rgb(150,150,150)"/></svg>
<div class="cell" style="left:913px;top:832px">80.00</div>
<div class="cell" style="left:1095px;top:832px">2025-12-02 08:30:00</div>
<div class="cell" style="left:1497px;top:832px">2025-12-09 16:00:00</div>
<div class="cell" style="left:1899px;top:832px">2025-12-12 00:00:00</div>
<div class="sw on" style="left:2302px;top:824px"><div class="st">启用</div><div class="k"></div></div>
<div class="sw off" style="left:2484px;top:824px"><div class="k"></div><div class="st">关闭</div></div>
<div class="cell" style="left:2667px;top:832px">2026-01-01</div>
<div class="cb" style="left:32px;top:907px"></div>
<div class="cell" style="left:130px;top:910px">121</div>
<div class="cell" style="right:2126px;top:910px">房租赁服务有限公司面...</div>
<div class="cell" style="left:313px;top:910px">2025年</div>
<svg class="a" style="left:403px;top:907px;filter:blur(0.8px)" width="143" height="32" viewBox="0 0 143 32" preserveAspectRatio="none"><rect x="0" y="0" width="9" height="8" fill="rgb(160,160,160)"/><rect x="9" y="0" width="9" height="8" fill="rgb(190,190,190)"/><rect x="18" y="0" width="9" height="8" fill="rgb(160,160,160)"/><rect x="27" y="0" width="9" height="8" fill="rgb(170,170,170)"/><rect x="36" y="0" width="9" height="8" fill="rgb(205,205,205)"/><rect x="45" y="0" width="9" height="8" fill="rgb(235,235,235)"/><rect x="54" y="0" width="9" height="8" fill="rgb(150,150,150)"/><rect x="63" y="0" width="9" height="8" fill="rgb(205,205,205)"/><rect x="72" y="0" width="9" height="8" fill="rgb(150,150,150)"/><rect x="81" y="0" width="9" height="8" fill="rgb(190,190,190)"/><rect x="90" y="0" width="9" height="8" fill="rgb(190,190,190)"/><rect x="99" y="0" width="9" height="8" fill="rgb(245,245,245)"/><rect x="108" y="0" width="9" height="8" fill="rgb(180,180,180)"/><rect x="117" y="0" width="9" height="8" fill="rgb(160,160,160)"/><rect x="126" y="0" width="9" height="8" fill="rgb(235,235,235)"/><rect x="135" y="0" width="9" height="8" fill="rgb(225,225,225)"/><rect x="0" y="8" width="9" height="8" fill="rgb(170,170,170)"/><rect x="9" y="8" width="9" height="8" fill="rgb(245,245,245)"/><rect x="18" y="8" width="9" height="8" fill="rgb(235,235,235)"/><rect x="27" y="8" width="9" height="8" fill="rgb(205,205,205)"/><rect x="36" y="8" width="9" height="8" fill="rgb(200,200,200)"/><rect x="45" y="8" width="9" height="8" fill="rgb(215,215,215)"/><rect x="54" y="8" width="9" height="8" fill="rgb(170,170,170)"/><rect x="63" y="8" width="9" height="8" fill="rgb(190,190,190)"/><rect x="72" y="8" width="9" height="8" fill="rgb(235,235,235)"/><rect x="81" y="8" width="9" height="8" fill="rgb(245,245,245)"/><rect x="90" y="8" width="9" height="8" fill="rgb(170,170,170)"/><rect x="99" y="8" width="9" height="8" fill="rgb(150,150,150)"/><rect x="108" y="8" width="9" height="8" fill="rgb(225,225,225)"/><rect x="117" y="8" width="9" height="8" fill="rgb(245,245,245)"/><rect x="126" y="8" width="9" height="8" fill="rgb(205,205,205)"/><rect x="135" y="8" width="9" height="8" fill="rgb(225,225,225)"/><rect x="0" y="16" width="9" height="8" fill="rgb(170,170,170)"/><rect x="9" y="16" width="9" height="8" fill="rgb(225,225,225)"/><rect x="18" y="16" width="9" height="8" fill="rgb(225,225,225)"/><rect x="27" y="16" width="9" height="8" fill="rgb(235,235,235)"/><rect x="36" y="16" width="9" height="8" fill="rgb(150,150,150)"/><rect x="45" y="16" width="9" height="8" fill="rgb(245,245,245)"/><rect x="54" y="16" width="9" height="8" fill="rgb(235,235,235)"/><rect x="63" y="16" width="9" height="8" fill="rgb(245,245,245)"/><rect x="72" y="16" width="9" height="8" fill="rgb(245,245,245)"/><rect x="81" y="16" width="9" height="8" fill="rgb(180,180,180)"/><rect x="90" y="16" width="9" height="8" fill="rgb(160,160,160)"/><rect x="99" y="16" width="9" height="8" fill="rgb(150,150,150)"/><rect x="108" y="16" width="9" height="8" fill="rgb(150,150,150)"/><rect x="117" y="16" width="9" height="8" fill="rgb(170,170,170)"/><rect x="126" y="16" width="9" height="8" fill="rgb(245,245,245)"/><rect x="135" y="16" width="9" height="8" fill="rgb(200,200,200)"/><rect x="0" y="24" width="9" height="8" fill="rgb(160,160,160)"/><rect x="9" y="24" width="9" height="8" fill="rgb(205,205,205)"/><rect x="18" y="24" width="9" height="8" fill="rgb(215,215,215)"/><rect x="27" y="24" width="9" height="8" fill="rgb(225,225,225)"/><rect x="36" y="24" width="9" height="8" fill="rgb(150,150,150)"/><rect x="45" y="24" width="9" height="8" fill="rgb(245,245,245)"/><rect x="54" y="24" width="9" height="8" fill="rgb(150,150,150)"/><rect x="63" y="24" width="9" height="8" fill="rgb(245,245,245)"/><rect x="72" y="24" width="9" height="8" fill="rgb(225,225,225)"/><rect x="81" y="24" width="9" height="8" fill="rgb(245,245,245)"/><rect x="90" y="24" width="9" height="8" fill="rgb(180,180,180)"/><rect x="99" y="24" width="9" height="8" fill="rgb(215,215,215)"/><rect x="108" y="24" width="9" height="8" fill="rgb(190,190,190)"/><rect x="117" y="24" width="9" height="8" fill="rgb(150,150,150)"/><rect x="126" y="24" width="9" height="8" fill="rgb(215,215,215)"/><rect x="135" y="24" width="9" height="8" fill="rgb(160,160,160)"/></svg>
<div class="cell" style="left:913px;top:910px">80.00</div>
<div class="cell" style="left:1095px;top:910px">2025-12-02 08:30:00</div>
<div class="cell" style="left:1497px;top:910px">2025-12-09 16:00:00</div>
<div class="cell" style="left:1899px;top:910px">2025-12-17 00:00:00</div>
<div class="sw on" style="left:2302px;top:902px"><div class="st">启用</div><div class="k"></div></div>
<div class="sw off" style="left:2484px;top:902px"><div class="k"></div><div class="st">关闭</div></div>
<div class="cell" style="left:2667px;top:910px">2026-01-01</div>
<div class="cb" style="left:32px;top:985px"></div>
<div class="cell" style="left:130px;top:988px">120</div>
<div class="cell" style="right:2126px;top:988px">租赁服务有限公司面...</div>
<div class="cell" style="left:313px;top:988px">2025年</div>
<svg class="a" style="left:403px;top:985px;filter:blur(0.8px)" width="168" height="32" viewBox="0 0 168 32" preserveAspectRatio="none"><rect x="0" y="0" width="9" height="8" fill="rgb(225,225,225)"/><rect x="9" y="0" width="9" height="8" fill="rgb(225,225,225)"/><rect x="18" y="0" width="9" height="8" fill="rgb(160,160,160)"/><rect x="27" y="0" width="9" height="8" fill="rgb(245,245,245)"/><rect x="36" y="0" width="9" height="8" fill="rgb(225,225,225)"/><rect x="45" y="0" width="9" height="8" fill="rgb(160,160,160)"/><rect x="54" y="0" width="9" height="8" fill="rgb(215,215,215)"/><rect x="63" y="0" width="9" height="8" fill="rgb(190,190,190)"/><rect x="72" y="0" width="9" height="8" fill="rgb(160,160,160)"/><rect x="81" y="0" width="9" height="8" fill="rgb(190,190,190)"/><rect x="90" y="0" width="9" height="8" fill="rgb(180,180,180)"/><rect x="99" y="0" width="9" height="8" fill="rgb(180,180,180)"/><rect x="108" y="0" width="9" height="8" fill="rgb(180,180,180)"/><rect x="117" y="0" width="9" height="8" fill="rgb(245,245,245)"/><rect x="126" y="0" width="9" height="8" fill="rgb(215,215,215)"/><rect x="135" y="0" width="9" height="8" fill="rgb(215,215,215)"/><rect x="144" y="0" width="9" height="8" fill="rgb(205,205,205)"/><rect x="153" y="0" width="9" height="8" fill="rgb(160,160,160)"/><rect x="162" y="0" width="9" height="8" fill="rgb(215,215,215)"/><rect x="0" y="8" width="9" height="8" fill="rgb(245,245,245)"/><rect x="9" y="8" width="9" height="8" fill="rgb(190,190,190)"/><rect x="18" y="8" width="9" height="8" fill="rgb(150,150,150)"/><rect x="27" y="8" width="9" height="8" fill="rgb(235,235,235)"/><rect x="36" y="8" width="9" height="8" fill="rgb(245,245,245)"/><rect x="45" y="8" width="9" height="8" fill="rgb(245,245,245)"/><rect x="54" y="8" width="9" height="8" fill="rgb(180,180,180)"/><rect x="63" y="8" width="9" height="8" fill="rgb(160,160,160)"/><rect x="72" y="8" width="9" height="8" fill="rgb(235,235,235)"/><rect x="81" y="8" width="9" height="8" fill="rgb(170,170,170)"/><rect x="90" y="8" width="9" height="8" fill="rgb(200,200,200)"/><rect x="99" y="8" width="9" height="8" fill="rgb(190,190,190)"/><rect x="108" y="8" width="9" height="8" fill="rgb(245,245,245)"/><rect x="117" y="8" width="9" height="8" fill="rgb(190,190,190)"/><rect x="126" y="8" width="9" height="8" fill="rgb(235,235,235)"/><rect x="135" y="8" width="9" height="8" fill="rgb(235,235,235)"/><rect x="144" y="8" width="9" height="8" fill="rgb(170,170,170)"/><rect x="153" y="8" width="9" height="8" fill="rgb(150,150,150)"/><rect x="162" y="8" width="9" height="8" fill="rgb(215,215,215)"/><rect x="0" y="16" width="9" height="8" fill="rgb(150,150,150)"/><rect x="9" y="16" width="9" height="8" fill="rgb(215,215,215)"/><rect x="18" y="16" width="9" height="8" fill="rgb(190,190,190)"/><rect x="27" y="16" width="9" height="8" fill="rgb(245,245,245)"/><rect x="36" y="16" width="9" height="8" fill="rgb(160,160,160)"/><rect x="45" y="16" width="9" height="8" fill="rgb(180,180,180)"/><rect x="54" y="16" width="9" height="8" fill="rgb(245,245,245)"/><rect x="63" y="16" width="9" height="8" fill="rgb(215,215,215)"/><rect x="72" y="16" width="9" height="8" fill="rgb(190,190,190)"/><rect x="81" y="16" width="9" height="8" fill="rgb(225,225,225)"/><rect x="90" y="16" width="9" height="8" fill="rgb(190,190,190)"/><rect x="99" y="16" width="9" height="8" fill="rgb(215,215,215)"/><rect x="108" y="16" width="9" height="8" fill="rgb(215,215,215)"/><rect x="117" y="16" width="9" height="8" fill="rgb(215,215,215)"/><rect x="126" y="16" width="9" height="8" fill="rgb(160,160,160)"/><rect x="135" y="16" width="9" height="8" fill="rgb(225,225,225)"/><rect x="144" y="16" width="9" height="8" fill="rgb(180,180,180)"/><rect x="153" y="16" width="9" height="8" fill="rgb(190,190,190)"/><rect x="162" y="16" width="9" height="8" fill="rgb(160,160,160)"/><rect x="0" y="24" width="9" height="8" fill="rgb(215,215,215)"/><rect x="9" y="24" width="9" height="8" fill="rgb(150,150,150)"/><rect x="18" y="24" width="9" height="8" fill="rgb(190,190,190)"/><rect x="27" y="24" width="9" height="8" fill="rgb(215,215,215)"/><rect x="36" y="24" width="9" height="8" fill="rgb(160,160,160)"/><rect x="45" y="24" width="9" height="8" fill="rgb(225,225,225)"/><rect x="54" y="24" width="9" height="8" fill="rgb(215,215,215)"/><rect x="63" y="24" width="9" height="8" fill="rgb(190,190,190)"/><rect x="72" y="24" width="9" height="8" fill="rgb(205,205,205)"/><rect x="81" y="24" width="9" height="8" fill="rgb(180,180,180)"/><rect x="90" y="24" width="9" height="8" fill="rgb(180,180,180)"/><rect x="99" y="24" width="9" height="8" fill="rgb(160,160,160)"/><rect x="108" y="24" width="9" height="8" fill="rgb(235,235,235)"/><rect x="117" y="24" width="9" height="8" fill="rgb(160,160,160)"/><rect x="126" y="24" width="9" height="8" fill="rgb(170,170,170)"/><rect x="135" y="24" width="9" height="8" fill="rgb(225,225,225)"/><rect x="144" y="24" width="9" height="8" fill="rgb(190,190,190)"/><rect x="153" y="24" width="9" height="8" fill="rgb(200,200,200)"/><rect x="162" y="24" width="9" height="8" fill="rgb(170,170,170)"/></svg>
<div class="cell" style="left:913px;top:988px">80.00</div>
<div class="cell" style="left:1095px;top:988px">2025-12-02 08:30:00</div>
<div class="cell" style="left:1497px;top:988px">2026-01-04 16:00:00</div>
<div class="cell" style="left:1899px;top:988px">2026-01-06 00:00:00</div>
<div class="sw on" style="left:2302px;top:980px"><div class="st">启用</div><div class="k"></div></div>
<div class="sw off" style="left:2484px;top:980px"><div class="k"></div><div class="st">关闭</div></div>
<div class="cell" style="left:2667px;top:988px">2026-01-01</div>
<div class="cb" style="left:32px;top:1063px"></div>
<div class="cell" style="left:130px;top:1066px">119</div>
<div class="cell" style="left:313px;top:1066px">2025年招聘政府机关事业单位窗口外派人...</div>
<div class="cell" style="left:913px;top:1066px">0.00</div>
<div class="cell" style="left:1095px;top:1066px">2025-11-27 17:28:31</div>
<div class="cell" style="left:1497px;top:1066px">2025-12-01 16:00:00</div>
<div class="cell" style="left:1899px;top:1066px">2027-11-27 00:00:00</div>
<div class="sw on" style="left:2302px;top:1058px"><div class="st">启用</div><div class="k"></div></div>
<div class="sw off" style="left:2484px;top:1058px"><div class="k"></div><div class="st">关闭</div></div>
<div class="cell" style="left:2667px;top:1066px">2025-01-01</div>
<div class="cb" style="left:32px;top:1141px"></div>
<div class="cell" style="left:130px;top:1144px">118</div>
<div class="cell" style="right:2126px;top:1144px">限公司招聘第二批...</div>
<div class="cell" style="left:313px;top:1144px">2025年安</div>
<svg class="a" style="left:417px;top:1141px;filter:blur(0.8px)" width="183" height="32" viewBox="0 0 183 32" preserveAspectRatio="none"><rect x="0" y="0" width="9" height="8" fill="rgb(235,235,235)"/><rect x="9" y="0" width="9" height="8" fill="rgb(245,245,245)"/><rect x="18" y="0" width="9" height="8" fill="rgb(225,225,225)"/><rect x="27" y="0" width="9" height="8" fill="rgb(190,190,190)"/><rect x="36" y="0" width="9" height="8" fill="rgb(160,160,160)"/><rect x="45" y="0" width="9" height="8" fill="rgb(200,200,200)"/><rect x="54" y="0" width="9" height="8" fill="rgb(180,180,180)"/><rect x="63" y="0" width="9" height="8" fill="rgb(215,215,215)"/><rect x="72" y="0" width="9" height="8" fill="rgb(215,215,215)"/><rect x="81" y="0" width="9" height="8" fill="rgb(205,205,205)"/><rect x="90" y="0" width="9" height="8" fill="rgb(150,150,150)"/><rect x="99" y="0" width="9" height="8" fill="rgb(170,170,170)"/><rect x="108" y="0" width="9" height="8" fill="rgb(150,150,150)"/><rect x="117" y="0" width="9" height="8" fill="rgb(215,215,215)"/><rect x="126" y="0" width="9" height="8" fill="rgb(245,245,245)"/><rect x="135" y="0" width="9" height="8" fill="rgb(215,215,215)"/><rect x="144" y="0" width="9" height="8" fill="rgb(205,205,205)"/><rect x="153" y="0" width="9" height="8" fill="rgb(190,190,190)"/><rect x="162" y="0" width="9" height="8" fill="rgb(170,170,170)"/><rect x="171" y="0" width="9" height="8" fill="rgb(205,205,205)"/><rect x="180" y="0" width="9" height="8" fill="rgb(200,200,200)"/><rect x="0" y="8" width="9" height="8" fill="rgb(205,205,205)"/><rect x="9" y="8" width="9" height="8" fill="rgb(200,200,200)"/><rect x="18" y="8" width="9" height="8" fill="rgb(160,160,160)"/><rect x="27" y="8" width="9" height="8" fill="rgb(200,200,200)"/><rect x="36" y="8" width="9" height="8" fill="rgb(150,150,150)"/><rect x="45" y="8" width="9" height="8" fill="rgb(200,200,200)"/><rect x="54" y="8" width="9" height="8" fill="rgb(200,200,200)"/><rect x="63" y="8" width="9" height="8" fill="rgb(205,205,205)"/><rect x="72" y="8" width="9" height="8" fill="rgb(160,160,160)"/><rect x="81" y="8" width="9" height="8" fill="rgb(180,180,180)"/><rect x="90" y="8" width="9" height="8" fill="rgb(150,150,150)"/><rect x="99" y="8" width="9" height="8" fill="rgb(190,190,190)"/><rect x="108" y="8" width="9" height="8" fill="rgb(190,190,190)"/><rect x="117" y="8" width="9" height="8" fill="rgb(200,200,200)"/><rect x="126" y="8" width="9" height="8" fill="rgb(160,160,160)"/><rect x="135" y="8" width="9" height="8" fill="rgb(205,205,205)"/><rect x="144" y="8" width="9" height="8" fill="rgb(205,205,205)"/><rect x="153" y="8" width="9" height="8" fill="rgb(235,235,235)"/><rect x="162" y="8" width="9" height="8" fill="rgb(160,160,160)"/><rect x="171" y="8" width="9" height="8" fill="rgb(200,200,200)"/><rect x="180" y="8" width="9" height="8" fill="rgb(205,205,205)"/><rect x="0" y="16" width="9" height="8" fill="rgb(190,190,190)"/><rect x="9" y="16" width="9" height="8" fill="rgb(150,150,150)"/><rect x="18" y="16" width="9" height="8" fill="rgb(190,190,190)"/><rect x="27" y="16" width="9" height="8" fill="rgb(160,160,160)"/><rect x="36" y="16" width="9" height="8" fill="rgb(150,150,150)"/><rect x="45" y="16" width="9" height="8" fill="rgb(245,245,245)"/><rect x="54" y="16" width="9" height="8" fill="rgb(190,190,190)"/><rect x="63" y="16" width="9" height="8" fill="rgb(245,245,245)"/><rect x="72" y="16" width="9" height="8" fill="rgb(170,170,170)"/><rect x="81" y="16" width="9" height="8" fill="rgb(180,180,180)"/><rect x="90" y="16" width="9" height="8" fill="rgb(190,190,190)"/><rect x="99" y="16" width="9" height="8" fill="rgb(205,205,205)"/><rect x="108" y="16" width="9" height="8" fill="rgb(225,225,225)"/><rect x="117" y="16" width="9" height="8" fill="rgb(200,200,200)"/><rect x="126" y="16" width="9" height="8" fill="rgb(180,180,180)"/><rect x="135" y="16" width="9" height="8" fill="rgb(200,200,200)"/><rect x="144" y="16" width="9" height="8" fill="rgb(205,205,205)"/><rect x="153" y="16" width="9" height="8" fill="rgb(150,150,150)"/><rect x="162" y="16" width="9" height="8" fill="rgb(245,245,245)"/><rect x="171" y="16" width="9" height="8" fill="rgb(205,205,205)"/><rect x="180" y="16" width="9" height="8" fill="rgb(225,225,225)"/><rect x="0" y="24" width="9" height="8" fill="rgb(225,225,225)"/><rect x="9" y="24" width="9" height="8" fill="rgb(180,180,180)"/><rect x="18" y="24" width="9" height="8" fill="rgb(160,160,160)"/><rect x="27" y="24" width="9" height="8" fill="rgb(150,150,150)"/><rect x="36" y="24" width="9" height="8" fill="rgb(205,205,205)"/><rect x="45" y="24" width="9" height="8" fill="rgb(215,215,215)"/><rect x="54" y="24" width="9" height="8" fill="rgb(235,235,235)"/><rect x="63" y="24" width="9" height="8" fill="rgb(170,170,170)"/><rect x="72" y="24" width="9" height="8" fill="rgb(245,245,245)"/><rect x="81" y="24" width="9" height="8" fill="rgb(190,190,190)"/><rect x="90" y="24" width="9" height="8" fill="rgb(215,215,215)"/><rect x="99" y="24" width="9" height="8" fill="rgb(150,150,150)"/><rect x="108" y="24" width="9" height="8" fill="rgb(225,225,225)"/><rect x="117" y="24" width="9" height="8" fill="rgb(170,170,170)"/><rect x="126" y="24" width="9" height="8" fill="rgb(170,170,170)"/><rect x="135" y="24" width="9" height="8" fill="rgb(215,215,215)"/><rect x="144" y="24" width="9" height="8" fill="rgb(205,205,205)"/><rect x="153" y="24" width="9" height="8" fill="rgb(200,200,200)"/><rect x="162" y="24" width="9" height="8" fill="rgb(190,190,190)"/><rect x="171" y="24" width="9" height="8" fill="rgb(190,190,190)"/><rect x="180" y="24" width="9" height="8" fill="rgb(190,190,190)"/></svg>
<div class="cell" style="left:913px;top:1144px">80.00</div>
<div class="cell" style="left:1095px;top:1144px">2025-11-19 15:09:09</div>
<div class="cell" style="left:1497px;top:1144px">2025-12-18 16:00:00</div>
<div class="cell" style="left:1899px;top:1144px">2025-12-23 00:00:00</div>
<div class="sw on" style="left:2302px;top:1136px"><div class="st">启用</div><div class="k"></div></div>
<div class="sw off" style="left:2484px;top:1136px"><div class="k"></div><div class="st">关闭</div></div>
<div class="cell" style="left:2667px;top:1144px">2025-01-01</div>
<div class="cb" style="left:32px;top:1219px"></div>
<div class="cell" style="left:130px;top:1222px">117</div>
<div class="cell" style="right:2126px;top:1222px">限公司招聘第二批...</div>
<div class="cell" style="left:313px;top:1222px">2025年安</div>
<svg class="a" style="left:417px;top:1219px;filter:blur(0.8px)" width="183" height="32" viewBox="0 0 183 32" preserveAspectRatio="none"><rect x="0" y="0" width="9" height="8" fill="rgb(245,245,245)"/><rect x="9" y="0" width="9" height="8" fill="rgb(190,190,190)"/><rect x="18" y="0" width="9" height="8" fill="rgb(205,205,205)"/><rect x="27" y="0" width="9" height="8" fill="rgb(245,245,245)"/><rect x="36" y="0" width="9" height="8" fill="rgb(180,180,180)"/><rect x="45" y="0" width="9" height="8" fill="rgb(190,190,190)"/><rect x="54" y="0" width="9" height="8" fill="rgb(215,215,215)"/><rect x="63" y="0" width="9" height="8" fill="rgb(225,225,225)"/><rect x="72" y="0" width="9" height="8" fill="rgb(245,245,245)"/><rect x="81" y="0" width="9" height="8" fill="rgb(205,205,205)"/><rect x="90" y="0" width="9" height="8" fill="rgb(160,160,160)"/><rect x="99" y="0" width="9" height="8" fill="rgb(170,170,170)"/><rect x="108" y="0" width="9" height="8" fill="rgb(245,245,245)"/><rect x="117" y="0" width="9" height="8" fill="rgb(170,170,170)"/><rect x="126" y="0" width="9" height="8" fill="rgb(160,160,160)"/><rect x="135" y="0" width="9" height="8" fill="rgb(180,180,180)"/><rect x="144" y="0" width="9" height="8" fill="rgb(225,225,225)"/><rect x="153" y="0" width="9" height="8" fill="rgb(215,215,215)"/><rect x="162" y="0" width="9" height="8" fill="rgb(225,225,225)"/><rect x="171" y="0" width="9" height="8" fill="rgb(180,180,180)"/><rect x="180" y="0" width="9" height="8" fill="rgb(215,215,215)"/><rect x="0" y="8" width="9" height="8" fill="rgb(200,200,200)"/><rect x="9" y="8" width="9" height="8" fill="rgb(215,215,215)"/><rect x="18" y="8" width="9" height="8" fill="rgb(205,205,205)"/><rect x="27" y="8" width="9" height="8" fill="rgb(170,170,170)"/><rect x="36" y="8" width="9" height="8" fill="rgb(225,225,225)"/><rect x="45" y="8" width="9" height="8" fill="rgb(180,180,180)"/><rect x="54" y="8" width="9" height="8" fill="rgb(180,180,180)"/><rect x="63" y="8" width="9" height="8" fill="rgb(160,160,160)"/><rect x="72" y="8" width="9" height="8" fill="rgb(170,170,170)"/><rect x="81" y="8" width="9" height="8" fill="rgb(200,200,200)"/><rect x="90" y="8" width="9" height="8" fill="rgb(225,225,225)"/><rect x="99" y="8" width="9" height="8" fill="rgb(160,160,160)"/><rect x="108" y="8" width="9" height="8" fill="rgb(200,200,200)"/><rect x="117" y="8" width="9" height="8" fill="rgb(180,180,180)"/><rect x="126" y="8" width="9" height="8" fill="rgb(200,200,200)"/><rect x="135" y="8" width="9" height="8" fill="rgb(190,190,190)"/><rect x="144" y="8" width="9" height="8" fill="rgb(235,235,235)"/><rect x="153" y="8" width="9" height="8" fill="rgb(180,180,180)"/><rect x="162" y="8" width="9" height="8" fill="rgb(150,150,150)"/><rect x="171" y="8" width="9" height="8" fill="rgb(205,205,205)"/><rect x="180" y="8" width="9" height="8" fill="rgb(205,205,205)"/><rect x="0" y="16" width="9" height="8" fill="rgb(205,205,205)"/><rect x="9" y="16" width="9" height="8" fill="rgb(225,225,225)"/><rect x="18" y="16" width="9" height="8" fill="rgb(180,180,180)"/><rect x="27" y="16" width="9" height="8" fill="rgb(205,205,205)"/><rect x="36" y="16" width="9" height="8" fill="rgb(190,190,190)"/><rect x="45" y="16" width="9" height="8" fill="rgb(200,200,200)"/><rect x="54" y="16" width="9" height="8" fill="rgb(150,150,150)"/><rect x="63" y="16" width="9" height="8" fill="rgb(215,215,215)"/><rect x="72" y="16" width="9" height="8" fill="rgb(190,190,190)"/><rect x="81" y="16" width="9" height="8" fill="rgb(235,235,235)"/><rect x="90" y="16" width="9" height="8" fill="rgb(200,200,200)"/><rect x="99" y="16" width="9" height="8" fill="rgb(170,170,170)"/><rect x="108" y="16" width="9" height="8" fill="rgb(245,245,245)"/><rect x="117" y="16" width="9" height="8" fill="rgb(225,225,225)"/><rect x="126" y="16" width="9" height="8" fill="rgb(225,225,225)"/><rect x="135" y="16" width="9" height="8" fill="rgb(245,245,245)"/><rect x="144" y="16" width="9" height="8" fill="rgb(180,180,180)"/><rect x="153" y="16" width="9" height="8" fill="rgb(160,160,160)"/><rect x="162" y="16" width="9" height="8" fill="rgb(190,190,190)"/><rect x="171" y="16" width="9" height="8" fill="rgb(180,180,180)"/><rect x="180" y="16" width="9" height="8" fill="rgb(205,205,205)"/><rect x="0" y="24" width="9" height="8" fill="rgb(205,205,205)"/><rect x="9" y="24" width="9" height="8" fill="rgb(245,245,245)"/><rect x="18" y="24" width="9" height="8" fill="rgb(215,215,215)"/><rect x="27" y="24" width="9" height="8" fill="rgb(205,205,205)"/><rect x="36" y="24" width="9" height="8" fill="rgb(190,190,190)"/><rect x="45" y="24" width="9" height="8" fill="rgb(150,150,150)"/><rect x="54" y="24" width="9" height="8" fill="rgb(170,170,170)"/><rect x="63" y="24" width="9" height="8" fill="rgb(150,150,150)"/><rect x="72" y="24" width="9" height="8" fill="rgb(205,205,205)"/><rect x="81" y="24" width="9" height="8" fill="rgb(215,215,215)"/><rect x="90" y="24" width="9" height="8" fill="rgb(235,235,235)"/><rect x="99" y="24" width="9" height="8" fill="rgb(215,215,215)"/><rect x="108" y="24" width="9" height="8" fill="rgb(150,150,150)"/><rect x="117" y="24" width="9" height="8" fill="rgb(160,160,160)"/><rect x="126" y="24" width="9" height="8" fill="rgb(205,205,205)"/><rect x="135" y="24" width="9" height="8" fill="rgb(225,225,225)"/><rect x="144" y="24" width="9" height="8" fill="rgb(215,215,215)"/><rect x="153" y="24" width="9" height="8" fill="rgb(215,215,215)"/><rect x="162" y="24" width="9" height="8" fill="rgb(180,180,180)"/><rect x="171" y="24" width="9" height="8" fill="rgb(160,160,160)"/><rect x="180" y="24" width="9" height="8" fill="rgb(180,180,180)"/></svg>
<div class="cell" style="left:913px;top:1222px">80.00</div>
<div class="cell" style="left:1095px;top:1222px">2025-11-19 15:08:11</div>
<div class="cell" style="left:1497px;top:1222px">2025-11-27 16:00:00</div>
<div class="cell" style="left:1899px;top:1222px">2025-12-03 00:00:00</div>
<div class="sw on" style="left:2302px;top:1214px"><div class="st">启用</div><div class="k"></div></div>
<div class="sw off" style="left:2484px;top:1214px"><div class="k"></div><div class="st">关闭</div></div>
<div class="cell" style="left:2667px;top:1222px">2025-01-01</div>
<div class="cb" style="left:32px;top:1297px"></div>
<div class="cell" style="left:130px;top:1300px">116</div>
<div class="cell" style="right:2126px;top:1300px">司招聘第二批...</div>
<div class="cell" style="left:313px;top:1300px">2025年安</div>
<svg class="a" style="left:417px;top:1297px;filter:blur(0.8px)" width="238" height="32" viewBox="0 0 238 32" preserveAspectRatio="none"><rect x="0" y="0" width="9" height="8" fill="rgb(170,170,170)"/><rect x="9" y="0" width="9" height="8" fill="rgb(170,170,170)"/><rect x="18" y="0" width="9" height="8" fill="rgb(225,225,225)"/><rect x="27" y="0" width="9" height="8" fill="rgb(245,245,245)"/><rect x="36" y="0" width="9" height="8" fill="rgb(160,160,160)"/><rect x="45" y="0" width="9" height="8" fill="rgb(245,245,245)"/><rect x="54" y="0" width="9" height="8" fill="rgb(215,215,215)"/><rect x="63" y="0" width="9" height="8" fill="rgb(160,160,160)"/><rect x="72" y="0" width="9" height="8" fill="rgb(225,225,225)"/><rect x="81" y="0" width="9" height="8" fill="rgb(150,150,150)"/><rect x="90" y="0" width="9" height="8" fill="rgb(150,150,150)"/><rect x="99" y="0" width="9" height="8" fill="rgb(170,170,170)"/><rect x="108" y="0" width="9" height="8" fill="rgb(180,180,180)"/><rect x="117" y="0" width="9" height="8" fill="rgb(235,235,235)"/><rect x="126" y="0" width="9" height="8" fill="rgb(150,150,150)"/><rect x="135" y="0" width="9" height="8" fill="rgb(245,245,245)"/><rect x="144" y="0" width="9" height="8" fill="rgb(190,190,190)"/><rect x="153" y="0" width="9" height="8" fill="rgb(170,170,170)"/><rect x="162" y="0" width="9" height="8" fill="rgb(245,245,245)"/><rect x="171" y="0" width="9" height="8" fill="rgb(190,190,190)"/><rect x="180" y="0" width="9" height="8" fill="rgb(225,225,225)"/><rect x="189" y="0" width="9" height="8" fill="rgb(245,245,245)"/><rect x="198" y="0" width="9" height="8" fill="rgb(205,205,205)"/><rect x="207" y="0" width="9" height="8" fill="rgb(160,160,160)"/><rect x="216" y="0" width="9" height="8" fill="rgb(160,160,160)"/><rect x="225" y="0" width="9" height="8" fill="rgb(160,160,160)"/><rect x="234" y="0" width="9" height="8" fill="rgb(190,190,190)"/><rect x="0" y="8" width="9" height="8" fill="rgb(225,225,225)"/><rect x="9" y="8" width="9" height="8" fill="rgb(235,235,235)"/><rect x="18" y="8" width="9" height="8" fill="rgb(180,180,180)"/><rect x="27" y="8" width="9" height="8" fill="rgb(205,205,205)"/><rect x="36" y="8" width="9" height="8" fill="rgb(190,190,190)"/><rect x="45" y="8" width="9" height="8" fill="rgb(180,180,180)"/><rect x="54" y="8" width="9" height="8" fill="rgb(235,235,235)"/><rect x="63" y="8" width="9" height="8" fill="rgb(150,150,150)"/><rect x="72" y="8" width="9" height="8" fill="rgb(150,150,150)"/><rect x="81" y="8" width="9" height="8" fill="rgb(225,225,225)"/><rect x="90" y="8" width="9" height="8" fill="rgb(190,190,190)"/><rect x="99" y="8" width="9" height="8" fill="rgb(215,215,215)"/><rect x="108" y="8" width="9" height="8" fill="rgb(190,190,190)"/><rect x="117" y="8" width="9" height="8" fill="rgb(200,200,200)"/><rect x="126" y="8" width="9" height="8" fill="rgb(245,245,245)"/><rect x="135" y="8" width="9" height="8" fill="rgb(180,180,180)"/><rect x="144" y="8" width="9" height="8" fill="rgb(215,215,215)"/><rect x="153" y="8" width="9" height="8" fill="rgb(225,225,225)"/><rect x="162" y="8" width="9" height="8" fill="rgb(180,180,180)"/><rect x="171" y="8" width="9" height="8" fill="rgb(225,225,225)"/><rect x="180" y="8" width="9" height="8" fill="rgb(180,180,180)"/><rect x="189" y="8" width="9" height="8" fill="rgb(150,150,150)"/><rect x="198" y="8" width="9" height="8" fill="rgb(205,205,205)"/><rect x="207" y="8" width="9" height="8" fill="rgb(245,245,245)"/><rect x="216" y="8" width="9" height="8" fill="rgb(190,190,190)"/><rect x="225" y="8" width="9" height="8" fill="rgb(150,150,150)"/><rect x="234" y="8" width="9" height="8" fill="rgb(150,150,150)"/><rect x="0" y="16" width="9" height="8" fill="rgb(180,180,180)"/><rect x="9" y="16" width="9" height="8" fill="rgb(215,215,215)"/><rect x="18" y="16" width="9" height="8" fill="rgb(245,245,245)"/><rect x="27" y="16" width="9" height="8" fill="rgb(245,245,245)"/><rect x="36" y="16" width="9" height="8" fill="rgb(205,205,205)"/><rect x="45" y="16" width="9" height="8" fill="rgb(160,160,160)"/><rect x="54" y="16" width="9" height="8" fill="rgb(190,190,190)"/><rect x="63" y="16" width="9" height="8" fill="rgb(180,180,180)"/><rect x="72" y="16" width="9" height="8" fill="rgb(245,245,245)"/><rect x="81" y="16" width="9" height="8" fill="rgb(205,205,205)"/><rect x="90" y="16" width="9" height="8" fill="rgb(200,200,200)"/><rect x="99" y="16" width="9" height="8" fill="rgb(180,180,180)"/><rect x="108" y="16" width="9" height="8" fill="rgb(215,215,215)"/><rect x="117" y="16" width="9" height="8" fill="rgb(150,150,150)"/><rect x="126" y="16" width="9" height="8" fill="rgb(200,200,200)"/><rect x="135" y="16" width="9" height="8" fill="rgb(205,205,205)"/><rect x="144" y="16" width="9" height="8" fill="rgb(200,200,200)"/><rect x="153" y="16" width="9" height="8" fill="rgb(245,245,245)"/><rect x="162" y="16" width="9" height="8" fill="rgb(205,205,205)"/><rect x="171" y="16" width="9" height="8" fill="rgb(180,180,180)"/><rect x="180" y="16" width="9" height="8" fill="rgb(150,150,150)"/><rect x="189" y="16" width="9" height="8" fill="rgb(190,190,190)"/><rect x="198" y="16" width="9" height="8" fill="rgb(225,225,225)"/><rect x="207" y="16" width="9" height="8" fill="rgb(160,160,160)"/><rect x="216" y="16" width="9" height="8" fill="rgb(180,180,180)"/><rect x="225" y="16" width="9" height="8" fill="rgb(215,215,215)"/><rect x="234" y="16" width="9" height="8" fill="rgb(180,180,180)"/><rect x="0" y="24" width="9" height="8" fill="rgb(190,190,190)"/><rect x="9" y="24" width="9" height="8" fill="rgb(180,180,180)"/><rect x="18" y="24" width="9" height="8" fill="rgb(180,180,180)"/><rect x="27" y="24" width="9" height="8" fill="rgb(215,215,215)"/><rect x="36" y="24" width="9" height="8" fill="rgb(180,180,180)"/><rect x="45" y="24" width="9" height="8" fill="rgb(190,190,190)"/><rect x="54" y="24" width="9" height="8" fill="rgb(190,190,190)"/><rect x="63" y="24" width="9" height="8" fill="rgb(160,160,160)"/><rect x="72" y="24" width="9" height="8" fill="rgb(235,235,235)"/><rect x="81" y="24" width="9" height="8" fill="rgb(215,215,215)"/><rect x="90" y="24" width="9" height="8" fill="rgb(235,235,235)"/><rect x="99" y="24" width="9" height="8" fill="rgb(170,170,170)"/><rect x="108" y="24" width="9" height="8" fill="rgb(180,180,180)"/><rect x="117" y="24" width="9" height="8" fill="rgb(215,215,215)"/><rect x="126" y="24" width="9" height="8" fill="rgb(205,205,205)"/><rect x="135" y="24" width="9" height="8" fill="rgb(245,245,245)"/><rect x="144" y="24" width="9" height="8" fill="rgb(150,150,150)"/><rect x="153" y="24" width="9" height="8" fill="rgb(235,235,235)"/><rect x="162" y="24" width="9" height="8" fill="rgb(170,170,170)"/><rect x="171" y="24" width="9" height="8" fill="rgb(205,205,205)"/><rect x="180" y="24" width="9" height="8" fill="rgb(150,150,150)"/><rect x="189" y="24" width="9" height="8" fill="rgb(180,180,180)"/><rect x="198" y="24" width="9" height="8" fill="rgb(150,150,150)"/><rect x="207" y="24" width="9" height="8" fill="rgb(235,235,235)"/><rect x="216" y="24" width="9" height="8" fill="rgb(170,170,170)"/><rect x="225" y="24" width="9" height="8" fill="rgb(205,205,205)"/><rect x="234" y="24" width="9" height="8" fill="rgb(150,150,150)"/></svg>
<div class="cell" style="left:913px;top:1300px">80.00</div>
<div class="cell" style="left:1095px;top:1300px">2025-11-19 15:07:08</div>
<div class="cell" style="left:1497px;top:1300px">2025-11-27 16:00:00</div>
<div class="cell" style="left:1899px;top:1300px">2025-12-03 00:00:00</div>
<div class="sw on" style="left:2302px;top:1292px"><div class="st">启用</div><div class="k"></div></div>
<div class="sw off" style="left:2484px;top:1292px"><div class="k"></div><div class="st">关闭</div></div>
<div class="cell" style="left:2667px;top:1300px">2025-01-01</div>
<div class="cb" style="left:32px;top:1375px"></div>
<div class="cell" style="left:130px;top:1378px">115</div>
<div class="cell" style="right:2126px;top:1378px">司法局公开招聘编外聘用人...</div>
<svg class="a" style="left:313px;top:1375px;filter:blur(0.8px)" width="169" height="32" viewBox="0 0 169 32" preserveAspectRatio="none"><rect x="0" y="0" width="9" height="8" fill="rgb(150,150,150)"/><rect x="9" y="0" width="9" height="8" fill="rgb(170,170,170)"/><rect x="18" y="0" width="9" height="8" fill="rgb(205,205,205)"/><rect x="27" y="0" width="9" height="8" fill="rgb(215,215,215)"/><rect x="36" y="0" width="9" height="8" fill="rgb(200,200,200)"/><rect x="45" y="0" width="9" height="8" fill="rgb(160,160,160)"/><rect x="54" y="0" width="9" height="8" fill="rgb(160,160,160)"/><rect x="63" y="0" width="9" height="8" fill="rgb(170,170,170)"/><rect x="72" y="0" width="9" height="8" fill="rgb(200,200,200)"/><rect x="81" y="0" width="9" height="8" fill="rgb(180,180,180)"/><rect x="90" y="0" width="9" height="8" fill="rgb(170,170,170)"/><rect x="99" y="0" width="9" height="8" fill="rgb(245,245,245)"/><rect x="108" y="0" width="9" height="8" fill="rgb(225,225,225)"/><rect x="117" y="0" width="9" height="8" fill="rgb(215,215,215)"/><rect x="126" y="0" width="9" height="8" fill="rgb(150,150,150)"/><rect x="135" y="0" width="9" height="8" fill="rgb(190,190,190)"/><rect x="144" y="0" width="9" height="8" fill="rgb(245,245,245)"/><rect x="153" y="0" width="9" height="8" fill="rgb(205,205,205)"/><rect x="162" y="0" width="9" height="8" fill="rgb(200,200,200)"/><rect x="0" y="8" width="9" height="8" fill="rgb(200,200,200)"/><rect x="9" y="8" width="9" height="8" fill="rgb(215,215,215)"/><rect x="18" y="8" width="9" height="8" fill="rgb(170,170,170)"/><rect x="27" y="8" width="9" height="8" fill="rgb(160,160,160)"/><rect x="36" y="8" width="9" height="8" fill="rgb(150,150,150)"/><rect x="45" y="8" width="9" height="8" fill="rgb(160,160,160)"/><rect x="54" y="8" width="9" height="8" fill="rgb(190,190,190)"/><rect x="63" y="8" width="9" height="8" fill="rgb(160,160,160)"/><rect x="72" y="8" width="9" height="8" fill="rgb(200,200,200)"/><rect x="81" y="8" width="9" height="8" fill="rgb(205,205,205)"/><rect x="90" y="8" width="9" height="8" fill="rgb(160,160,160)"/><rect x="99" y="8" width="9" height="8" fill="rgb(225,225,225)"/><rect x="108" y="8" width="9" height="8" fill="rgb(180,180,180)"/><rect x="117" y="8" width="9" height="8" fill="rgb(205,205,205)"/><rect x="126" y="8" width="9" height="8" fill="rgb(200,200,200)"/><rect x="135" y="8" width="9" height="8" fill="rgb(190,190,190)"/><rect x="144" y="8" width="9" height="8" fill="rgb(205,205,205)"/><rect x="153" y="8" width="9" height="8" fill="rgb(160,160,160)"/><rect x="162" y="8" width="9" height="8" fill="rgb(150,150,150)"/><rect x="0" y="16" width="9" height="8" fill="rgb(215,215,215)"/><rect x="9" y="16" width="9" height="8" fill="rgb(180,180,180)"/><rect x="18" y="16" width="9" height="8" fill="rgb(200,200,200)"/><rect x="27" y="16" width="9" height="8" fill="rgb(225,225,225)"/><rect x="36" y="16" width="9" height="8" fill="rgb(215,215,215)"/><rect x="45" y="16" width="9" height="8" fill="rgb(180,180,180)"/><rect x="54" y="16" width="9" height="8" fill="rgb(200,200,200)"/><rect x="63" y="16" width="9" height="8" fill="rgb(200,200,200)"/><rect x="72" y="16" width="9" height="8" fill="rgb(215,215,215)"/><rect x="81" y="16" width="9" height="8" fill="rgb(150,150,150)"/><rect x="90" y="16" width="9" height="8" fill="rgb(245,245,245)"/><rect x="99" y="16" width="9" height="8" fill="rgb(205,205,205)"/><rect x="108" y="16" width="9" height="8" fill="rgb(180,180,180)"/><rect x="117" y="16" width="9" height="8" fill="rgb(245,245,245)"/><rect x="126" y="16" width="9" height="8" fill="rgb(205,205,205)"/><rect x="135" y="16" width="9" height="8" fill="rgb(150,150,150)"/><rect x="144" y="16" width="9" height="8" fill="rgb(205,205,205)"/><rect x="153" y="16" width="9" height="8" fill="rgb(150,150,150)"/><rect x="162" y="16" width="9" height="8" fill="rgb(215,215,215)"/><rect x="0" y="24" width="9" height="8" fill="rgb(160,160,160)"/><rect x="9" y="24" width="9" height="8" fill="rgb(150,150,150)"/><rect x="18" y="24" width="9" height="8" fill="rgb(190,190,190)"/><rect x="27" y="24" width="9" height="8" fill="rgb(180,180,180)"/><rect x="36" y="24" width="9" height="8" fill="rgb(160,160,160)"/><rect x="45" y="24" width="9" height="8" fill="rgb(235,235,235)"/><rect x="54" y="24" width="9" height="8" fill="rgb(200,200,200)"/><rect x="63" y="24" width="9" height="8" fill="rgb(200,200,200)"/><rect x="72" y="24" width="9" height="8" fill="rgb(190,190,190)"/><rect x="81" y="24" width="9" height="8" fill="rgb(200,200,200)"/><rect x="90" y="24" width="9" height="8" fill="rgb(235,235,235)"/><rect x="99" y="24" width="9" height="8" fill="rgb(150,150,150)"/><rect x="108" y="24" width="9" height="8" fill="rgb(190,190,190)"/><rect x="117" y="24" width="9" height="8" fill="rgb(200,200,200)"/><rect x="126" y="24" width="9" height="8" fill="rgb(190,190,190)"/><rect x="135" y="24" width="9" height="8" fill="rgb(190,190,190)"/><rect x="144" y="24" width="9" height="8" fill="rgb(150,150,150)"/><rect x="153" y="24" width="9" height="8" fill="rgb(235,235,235)"/><rect x="162" y="24" width="9" height="8" fill="rgb(245,245,245)"/></svg>
<div class="cell" style="left:913px;top:1378px">45.00</div>
<div class="cell" style="left:1095px;top:1378px">2025-11-24 08:30:00</div>
<div class="cell" style="left:1497px;top:1378px">2025-11-26 17:00:00</div>
<div class="cell" style="left:1899px;top:1378px">2025-11-29 17:00:00</div>
<div class="sw on" style="left:2302px;top:1370px"><div class="st">启用</div><div class="k"></div></div>
<div class="sw off" style="left:2484px;top:1370px"><div class="k"></div><div class="st">关闭</div></div>
<div class="cell" style="left:2667px;top:1378px">2025-01-01</div>
<div class="cb" style="left:32px;top:1453px"></div>
<div class="cell" style="left:130px;top:1456px">114</div>
<div class="cell" style="right:2126px;top:1456px">法局公开招聘编外聘用人...</div>
<svg class="a" style="left:313px;top:1453px;filter:blur(0.8px)" width="198" height="32" viewBox="0 0 198 32" preserveAspectRatio="none"><rect x="0" y="0" width="9" height="8" fill="rgb(160,160,160)"/><rect x="9" y="0" width="9" height="8" fill="rgb(150,150,150)"/><rect x="18" y="0" width="9" height="8" fill="rgb(180,180,180)"/><rect x="27" y="0" width="9" height="8" fill="rgb(160,160,160)"/><rect x="36" y="0" width="9" height="8" fill="rgb(215,215,215)"/><rect x="45" y="0" width="9" height="8" fill="rgb(215,215,215)"/><rect x="54" y="0" width="9" height="8" fill="rgb(205,205,205)"/><rect x="63" y="0" width="9" height="8" fill="rgb(190,190,190)"/><rect x="72" y="0" width="9" height="8" fill="rgb(205,205,205)"/><rect x="81" y="0" width="9" height="8" fill="rgb(215,215,215)"/><rect x="90" y="0" width="9" height="8" fill="rgb(170,170,170)"/><rect x="99" y="0" width="9" height="8" fill="rgb(215,215,215)"/><rect x="108" y="0" width="9" height="8" fill="rgb(170,170,170)"/><rect x="117" y="0" width="9" height="8" fill="rgb(150,150,150)"/><rect x="126" y="0" width="9" height="8" fill="rgb(190,190,190)"/><rect x="135" y="0" width="9" height="8" fill="rgb(170,170,170)"/><rect x="144" y="0" width="9" height="8" fill="rgb(235,235,235)"/><rect x="153" y="0" width="9" height="8" fill="rgb(180,180,180)"/><rect x="162" y="0" width="9" height="8" fill="rgb(200,200,200)"/><rect x="171" y="0" width="9" height="8" fill="rgb(200,200,200)"/><rect x="180" y="0" width="9" height="8" fill="rgb(215,215,215)"/><rect x="189" y="0" width="9" height="8" fill="rgb(200,200,200)"/><rect x="198" y="0" width="9" height="8" fill="rgb(235,235,235)"/><rect x="0" y="8" width="9" height="8" fill="rgb(160,160,160)"/><rect x="9" y="8" width="9" height="8" fill="rgb(225,225,225)"/><rect x="18" y="8" width="9" height="8" fill="rgb(180,180,180)"/><rect x="27" y="8" width="9" height="8" fill="rgb(205,205,205)"/><rect x="36" y="8" width="9" height="8" fill="rgb(170,170,170)"/><rect x="45" y="8" width="9" height="8" fill="rgb(180,180,180)"/><rect x="54" y="8" width="9" height="8" fill="rgb(205,205,205)"/><rect x="63" y="8" width="9" height="8" fill="rgb(160,160,160)"/><rect x="72" y="8" width="9" height="8" fill="rgb(245,245,245)"/><rect x="81" y="8" width="9" height="8" fill="rgb(150,150,150)"/><rect x="90" y="8" width="9" height="8" fill="rgb(215,215,215)"/><rect x="99" y="8" width="9" height="8" fill="rgb(225,225,225)"/><rect x="108" y="8" width="9" height="8" fill="rgb(225,225,225)"/><rect x="117" y="8" width="9" height="8" fill="rgb(200,200,200)"/><rect x="126" y="8" width="9" height="8" fill="rgb(170,170,170)"/><rect x="135" y="8" width="9" height="8" fill="rgb(205,205,205)"/><rect x="144" y="8" width="9" height="8" fill="rgb(160,160,160)"/><rect x="153" y="8" width="9" height="8" fill="rgb(160,160,160)"/><rect x="162" y="8" width="9" height="8" fill="rgb(190,190,190)"/><rect x="171" y="8" width="9" height="8" fill="rgb(235,235,235)"/><rect x="180" y="8" width="9" height="8" fill="rgb(160,160,160)"/><rect x="189" y="8" width="9" height="8" fill="rgb(180,180,180)"/><rect x="198" y="8" width="9" height="8" fill="rgb(160,160,160)"/><rect x="0" y="16" width="9" height="8" fill="rgb(205,205,205)"/><rect x="9" y="16" width="9" height="8" fill="rgb(215,215,215)"/><rect x="18" y="16" width="9" height="8" fill="rgb(215,215,215)"/><rect x="27" y="16" width="9" height="8" fill="rgb(170,170,170)"/><rect x="36" y="16" width="9" height="8" fill="rgb(180,180,180)"/><rect x="45" y="16" width="9" height="8" fill="rgb(170,170,170)"/><rect x="54" y="16" width="9" height="8" fill="rgb(205,205,205)"/><rect x="63" y="16" width="9" height="8" fill="rgb(215,215,215)"/><rect x="72" y="16" width="9" height="8" fill="rgb(235,235,235)"/><rect x="81" y="16" width="9" height="8" fill="rgb(245,245,245)"/><rect x="90" y="16" width="9" height="8" fill="rgb(180,180,180)"/><rect x="99" y="16" width="9" height="8" fill="rgb(225,225,225)"/><rect x="108" y="16" width="9" height="8" fill="rgb(245,245,245)"/><rect x="117" y="16" width="9" height="8" fill="rgb(160,160,160)"/><rect x="126" y="16" width="9" height="8" fill="rgb(190,190,190)"/><rect x="135" y="16" width="9" height="8" fill="rgb(190,190,190)"/><rect x="144" y="16" width="9" height="8" fill="rgb(190,190,190)"/><rect x="153" y="16" width="9" height="8" fill="rgb(235,235,235)"/><rect x="162" y="16" width="9" height="8" fill="rgb(190,190,190)"/><rect x="171" y="16" width="9" height="8" fill="rgb(200,200,200)"/><rect x="180" y="16" width="9" height="8" fill="rgb(190,190,190)"/><rect x="189" y="16" width="9" height="8" fill="rgb(190,190,190)"/><rect x="198" y="16" width="9" height="8" fill="rgb(180,180,180)"/><rect x="0" y="24" width="9" height="8" fill="rgb(215,215,215)"/><rect x="9" y="24" width="9" height="8" fill="rgb(180,180,180)"/><rect x="18" y="24" width="9" height="8" fill="rgb(170,170,170)"/><rect x="27" y="24" width="9" height="8" fill="rgb(180,180,180)"/><rect x="36" y="24" width="9" height="8" fill="rgb(180,180,180)"/><rect x="45" y="24" width="9" height="8" fill="rgb(170,170,170)"/><rect x="54" y="24" width="9" height="8" fill="rgb(190,190,190)"/><rect x="63" y="24" width="9" height="8" fill="rgb(235,235,235)"/><rect x="72" y="24" width="9" height="8" fill="rgb(180,180,180)"/><rect x="81" y="24" width="9" height="8" fill="rgb(200,200,200)"/><rect x="90" y="24" width="9" height="8" fill="rgb(160,160,160)"/><rect x="99" y="24" width="9" height="8" fill="rgb(205,205,205)"/><rect x="108" y="24" width="9" height="8" fill="rgb(190,190,190)"/><rect x="117" y="24" width="9" height="8" fill="rgb(180,180,180)"/><rect x="126" y="24" width="9" height="8" fill="rgb(225,225,225)"/><rect x="135" y="24" width="9" height="8" fill="rgb(225,225,225)"/><rect x="144" y="24" width="9" height="8" fill="rgb(180,180,180)"/><rect x="153" y="24" width="9" height="8" fill="rgb(245,245,245)"/><rect x="162" y="24" width="9" height="8" fill="rgb(160,160,160)"/><rect x="171" y="24" width="9" height="8" fill="rgb(245,245,245)"/><rect x="180" y="24" width="9" height="8" fill="rgb(215,215,215)"/><rect x="189" y="24" width="9" height="8" fill="rgb(150,150,150)"/><rect x="198" y="24" width="9" height="8" fill="rgb(160,160,160)"/></svg>
<div class="cell" style="left:913px;top:1456px">45.00</div>
<div class="cell" style="left:1095px;top:1456px">2025-11-24 08:30:00</div>
<div class="cell" style="left:1497px;top:1456px">2025-11-26 17:00:00</div>
<div class="cell" style="left:1899px;top:1456px">2025-11-29 17:00:00</div>
<div class="sw on" style="left:2302px;top:1448px"><div class="st">启用</div><div class="k"></div></div>
<div class="sw off" style="left:2484px;top:1448px"><div class="k"></div><div class="st">关闭</div></div>
<div class="cell" style="left:2667px;top:1456px">2025-01-01</div>
<div class="cb" style="left:32px;top:1531px"></div>
<div class="cell" style="left:130px;top:1534px">113</div>
<div class="cell" style="right:2126px;top:1534px">管局公开招聘编外聘用人...</div>
<svg class="a" style="left:313px;top:1531px;filter:blur(0.8px)" width="198" height="32" viewBox="0 0 198 32" preserveAspectRatio="none"><rect x="0" y="0" width="9" height="8" fill="rgb(150,150,150)"/><rect x="9" y="0" width="9" height="8" fill="rgb(215,215,215)"/><rect x="18" y="0" width="9" height="8" fill="rgb(180,180,180)"/><rect x="27" y="0" width="9" height="8" fill="rgb(215,215,215)"/><rect x="36" y="0" width="9" height="8" fill="rgb(200,200,200)"/><rect x="45" y="0" width="9" height="8" fill="rgb(150,150,150)"/><rect x="54" y="0" width="9" height="8" fill="rgb(190,190,190)"/><rect x="63" y="0" width="9" height="8" fill="rgb(180,180,180)"/><rect x="72" y="0" width="9" height="8" fill="rgb(160,160,160)"/><rect x="81" y="0" width="9" height="8" fill="rgb(150,150,150)"/><rect x="90" y="0" width="9" height="8" fill="rgb(180,180,180)"/><rect x="99" y="0" width="9" height="8" fill="rgb(235,235,235)"/><rect x="108" y="0" width="9" height="8" fill="rgb(235,235,235)"/><rect x="117" y="0" width="9" height="8" fill="rgb(180,180,180)"/><rect x="126" y="0" width="9" height="8" fill="rgb(160,160,160)"/><rect x="135" y="0" width="9" height="8" fill="rgb(200,200,200)"/><rect x="144" y="0" width="9" height="8" fill="rgb(225,225,225)"/><rect x="153" y="0" width="9" height="8" fill="rgb(170,170,170)"/><rect x="162" y="0" width="9" height="8" fill="rgb(215,215,215)"/><rect x="171" y="0" width="9" height="8" fill="rgb(235,235,235)"/><rect x="180" y="0" width="9" height="8" fill="rgb(190,190,190)"/><rect x="189" y="0" width="9" height="8" fill="rgb(245,245,245)"/><rect x="198" y="0" width="9" height="8" fill="rgb(150,150,150)"/><rect x="0" y="8" width="9" height="8" fill="rgb(160,160,160)"/><rect x="9" y="8" width="9" height="8" fill="rgb(245,245,245)"/><rect x="18" y="8" width="9" height="8" fill="rgb(235,235,235)"/><rect x="27" y="8" width="9" height="8" fill="rgb(235,235,235)"/><rect x="36" y="8" width="9" height="8" fill="rgb(200,200,200)"/><rect x="45" y="8" width="9" height="8" fill="rgb(180,180,180)"/><rect x="54" y="8" width="9" height="8" fill="rgb(150,150,150)"/><rect x="63" y="8" width="9" height="8" fill="rgb(200,200,200)"/><rect x="72" y="8" width="9" height="8" fill="rgb(200,200,200)"/><rect x="81" y="8" width="9" height="8" fill="rgb(170,170,170)"/><rect x="90" y="8" width="9" height="8" fill="rgb(150,150,150)"/><rect x="99" y="8" width="9" height="8" fill="rgb(180,180,180)"/><rect x="108" y="8" width="9" height="8" fill="rgb(190,190,190)"/><rect x="117" y="8" width="9" height="8" fill="rgb(150,150,150)"/><rect x="126" y="8" width="9" height="8" fill="rgb(235,235,235)"/><rect x="135" y="8" width="9" height="8" fill="rgb(245,245,245)"/><rect x="144" y="8" width="9" height="8" fill="rgb(180,180,180)"/><rect x="153" y="8" width="9" height="8" fill="rgb(150,150,150)"/><rect x="162" y="8" width="9" height="8" fill="rgb(200,200,200)"/><rect x="171" y="8" width="9" height="8" fill="rgb(205,205,205)"/><rect x="180" y="8" width="9" height="8" fill="rgb(245,245,245)"/><rect x="189" y="8" width="9" height="8" fill="rgb(200,200,200)"/><rect x="198" y="8" width="9" height="8" fill="rgb(170,170,170)"/><rect x="0" y="16" width="9" height="8" fill="rgb(235,235,235)"/><rect x="9" y="16" width="9" height="8" fill="rgb(190,190,190)"/><rect x="18" y="16" width="9" height="8" fill="rgb(160,160,160)"/><rect x="27" y="16" width="9" height="8" fill="rgb(180,180,180)"/><rect x="36" y="16" width="9" height="8" fill="rgb(150,150,150)"/><rect x="45" y="16" width="9" height="8" fill="rgb(215,215,215)"/><rect x="54" y="16" width="9" height="8" fill="rgb(225,225,225)"/><rect x="63" y="16" width="9" height="8" fill="rgb(215,215,215)"/><rect x="72" y="16" width="9" height="8" fill="rgb(160,160,160)"/><rect x="81" y="16" width="9" height="8" fill="rgb(205,205,205)"/><rect x="90" y="16" width="9" height="8" fill="rgb(160,160,160)"/><rect x="99" y="16" width="9" height="8" fill="rgb(205,205,205)"/><rect x="108" y="16" width="9" height="8" fill="rgb(245,245,245)"/><rect x="117" y="16" width="9" height="8" fill="rgb(225,225,225)"/><rect x="126" y="16" width="9" height="8" fill="rgb(170,170,170)"/><rect x="135" y="16" width="9" height="8" fill="rgb(245,245,245)"/><rect x="144" y="16" width="9" height="8" fill="rgb(225,225,225)"/><rect x="153" y="16" width="9" height="8" fill="rgb(160,160,160)"/><rect x="162" y="16" width="9" height="8" fill="rgb(245,245,245)"/><rect x="171" y="16" width="9" height="8" fill="rgb(170,170,170)"/><rect x="180" y="16" width="9" height="8" fill="rgb(205,205,205)"/><rect x="189" y="16" width="9" height="8" fill="rgb(190,190,190)"/><rect x="198" y="16" width="9" height="8" fill="rgb(205,205,205)"/><rect x="0" y="24" width="9" height="8" fill="rgb(190,190,190)"/><rect x="9" y="24" width="9" height="8" fill="rgb(245,245,245)"/><rect x="18" y="24" width="9" height="8" fill="rgb(190,190,190)"/><rect x="27" y="24" width="9" height="8" fill="rgb(205,205,205)"/><rect x="36" y="24" width="9" height="8" fill="rgb(150,150,150)"/><rect x="45" y="24" width="9" height="8" fill="rgb(190,190,190)"/><rect x="54" y="24" width="9" height="8" fill="rgb(235,235,235)"/><rect x="63" y="24" width="9" height="8" fill="rgb(200,200,200)"/><rect x="72" y="24" width="9" height="8" fill="rgb(205,205,205)"/><rect x="81" y="24" width="9" height="8" fill="rgb(205,205,205)"/><rect x="90" y="24" width="9" height="8" fill="rgb(150,150,150)"/><rect x="99" y="24" width="9" height="8" fill="rgb(200,200,200)"/><rect x="108" y="24" width="9" height="8" fill="rgb(245,245,245)"/><rect x="117" y="24" width="9" height="8" fill="rgb(180,180,180)"/><rect x="126" y="24" width="9" height="8" fill="rgb(205,205,205)"/><rect x="135" y="24" width="9" height="8" fill="rgb(205,205,205)"/><rect x="144" y="24" width="9" height="8" fill="rgb(180,180,180)"/><rect x="153" y="24" width="9" height="8" fill="rgb(150,150,150)"/><rect x="162" y="24" width="9" height="8" fill="rgb(205,205,205)"/><rect x="171" y="24" width="9" height="8" fill="rgb(170,170,170)"/><rect x="180" y="24" width="9" height="8" fill="rgb(205,205,205)"/><rect x="189" y="24" width="9" height="8" fill="rgb(160,160,160)"/><rect x="198" y="24" width="9" height="8" fill="rgb(160,160,160)"/></svg>
<div class="cell" style="left:913px;top:1534px">45.00</div>
<div class="cell" style="left:1095px;top:1534px">2025-11-24 08:30:00</div>
<div class="cell" style="left:1497px;top:1534px">2025-11-26 17:00:00</div>
<div class="cell" style="left:1899px;top:1534px">2025-11-29 17:00:00</div>
<div class="sw on" style="left:2302px;top:1526px"><div class="st">启用</div><div class="k"></div></div>
<div class="sw off" style="left:2484px;top:1526px"><div class="k"></div><div class="st">关闭</div></div>
<div class="cell" style="left:2667px;top:1534px">2025-01-01</div>
<div class="a" style="left:2731px;top:105px;width:240px;height:1600px;background:#fff;box-shadow:-6px 0 10px rgba(0,0,0,0.07)">
<div class="a" style="left:0;top:0;width:238px;height:76px;background:#f2f2f2"></div>
<div class="a" style="left:0;top:0;width:2px;height:1600px;background:#e6e6e6"></div>
<div class="hl" style="top:76px;width:240px"></div>
<div class="hl" style="top:154px;width:240px"></div>
<div class="hl" style="top:232px;width:240px"></div>
<div class="hl" style="top:310px;width:240px"></div>
<div class="hl" style="top:388px;width:240px"></div>
<div class="hl" style="top:466px;width:240px"></div>
<div class="hl" style="top:544px;width:240px"></div>
<div class="hl" style="top:622px;width:240px"></div>
<div class="hl" style="top:700px;width:240px"></div>
<div class="hl" style="top:778px;width:240px"></div>
<div class="hl" style="top:856px;width:240px"></div>
<div class="hl" style="top:934px;width:240px"></div>
<div class="hl" style="top:1012px;width:240px"></div>
<div class="hl" style="top:1090px;width:240px"></div>
<div class="hl" style="top:1168px;width:240px"></div>
<div class="hl" style="top:1246px;width:240px"></div>
<div class="hl" style="top:1324px;width:240px"></div>
<div class="hl" style="top:1402px;width:240px"></div>
<div class="hl" style="top:1480px;width:240px"></div>
<div class="cell" style="left:93px;top:26px">操作</div>
<div class="btnm" style="left:37px;top:98px"><div class="st">修改</div></div>
<div class="btnd" style="left:137px;top:97px"><div class="st">删除</div></div>
<div class="btnm" style="left:37px;top:176px"><div class="st">修改</div></div>
<div class="btnd" style="left:137px;top:175px"><div class="st">删除</div></div>
<div class="btnm" style="left:37px;top:254px"><div class="st">修改</div></div>
<div class="btnd" style="left:137px;top:253px"><div class="st">删除</div></div>
<div class="btnm" style="left:37px;top:332px"><div class="st">修改</div></div>
<div class="btnd" style="left:137px;top:331px"><div class="st">删除</div></div>
<div class="btnm" style="left:37px;top:410px"><div class="st">修改</div></div>
<div class="btnd" style="left:137px;top:409px"><div class="st">删除</div></div>
<div class="btnm" style="left:37px;top:488px"><div class="st">修改</div></div>
<div class="btnd" style="left:137px;top:487px"><div class="st">删除</div></div>
<div class="btnm" style="left:37px;top:566px"><div class="st">修改</div></div>
<div class="btnd" style="left:137px;top:565px"><div class="st">删除</div></div>
<div class="btnm" style="left:37px;top:644px"><div class="st">修改</div></div>
<div class="btnd" style="left:137px;top:643px"><div class="st">删除</div></div>
<div class="btnm" style="left:37px;top:722px"><div class="st">修改</div></div>
<div class="btnd" style="left:137px;top:721px"><div class="st">删除</div></div>
<div class="btnm" style="left:37px;top:800px"><div class="st">修改</div></div>
<div class="btnd" style="left:137px;top:799px"><div class="st">删除</div></div>
<div class="btnm" style="left:37px;top:878px"><div class="st">修改</div></div>
<div class="btnd" style="left:137px;top:877px"><div class="st">删除</div></div>
<div class="btnm" style="left:37px;top:956px"><div class="st">修改</div></div>
<div class="btnd" style="left:137px;top:955px"><div class="st">删除</div></div>
<div class="btnm" style="left:37px;top:1034px"><div class="st">修改</div></div>
<div class="btnd" style="left:137px;top:1033px"><div class="st">删除</div></div>
<div class="btnm" style="left:37px;top:1112px"><div class="st">修改</div></div>
<div class="btnd" style="left:137px;top:1111px"><div class="st">删除</div></div>
<div class="btnm" style="left:37px;top:1190px"><div class="st">修改</div></div>
<div class="btnd" style="left:137px;top:1189px"><div class="st">删除</div></div>
<div class="btnm" style="left:37px;top:1268px"><div class="st">修改</div></div>
<div class="btnd" style="left:137px;top:1267px"><div class="st">删除</div></div>
<div class="btnm" style="left:37px;top:1346px"><div class="st">修改</div></div>
<div class="btnd" style="left:137px;top:1345px"><div class="st">删除</div></div>
<div class="btnm" style="left:37px;top:1424px"><div class="st">修改</div></div>
<div class="btnd" style="left:137px;top:1423px"><div class="st">删除</div></div>
</div>
</div>
</div>
<div class="a" style="left:3094px;top:0;width:20px;height:1439px;background:#c1c1c1;border-radius:10px"></div>
<div class="a" style="left:0;top:1628px;width:3112px;height:80px;background:linear-gradient(rgba(0,0,0,0),rgba(0,0,0,0.09))"></div>
</div>
<div class="a" style="left:0;top:0;width:3582px;height:1892px;border-radius:0 0 26px 26px;box-shadow:0 0 0 40px #000;border-left:2px solid #b4b8be;z-index:50;pointer-events:none"></div>
</body></html>
